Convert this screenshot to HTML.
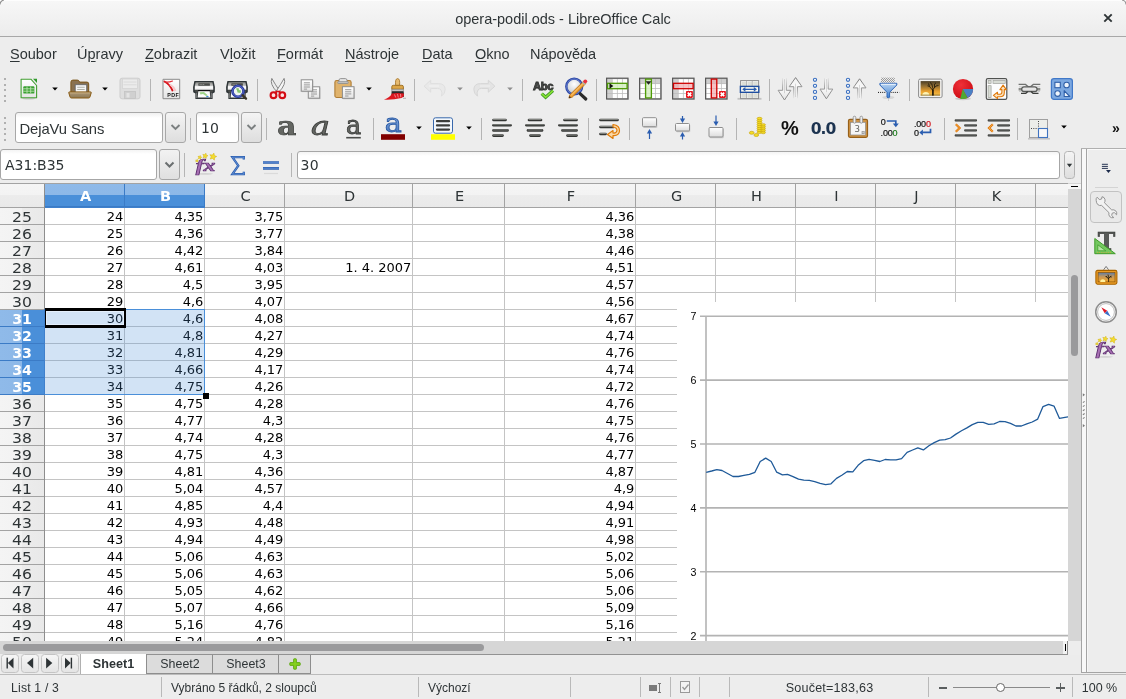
<!DOCTYPE html>
<html lang="cs"><head><meta charset="utf-8"><title>opera-podil.ods - LibreOffice Calc</title>
<style>
html,body{margin:0;padding:0}
body{width:1126px;height:699px;overflow:hidden;background:#ededed;position:relative;will-change:transform;font-family:"Liberation Sans",sans-serif;color:#2e3436}
div,svg{position:absolute;box-sizing:content-box}
u{text-decoration:underline;text-underline-offset:2px}
</style></head>
<body>
<div style="left:0px;top:0px;width:1126px;height:36px;background:linear-gradient(#f7f7f7,#ececec)"></div>
<svg style="left:0px;top:0px" width="6" height="6" viewBox="0 0 6 6"><path d="M0 0H5.500A5.500 5.500 0 0 0 0 5.500Z" fill="#fff"/><path d="M0 4.500A4.500 4.500 0 0 1 4.500 0" fill="none" stroke="#8c8c8c" stroke-width="1.100"/></svg>
<svg style="left:1120px;top:0px" width="6" height="6" viewBox="0 0 6 6"><path d="M6 0H0.500A5.500 5.500 0 0 1 6 5.500Z" fill="#fff"/><path d="M6 4.500A4.500 4.500 0 0 0 1.500 0" fill="none" stroke="#8c8c8c" stroke-width="1.100"/></svg>
<div style="left:0px;top:36px;width:1126px;height:1px;background:#a8a8a8"></div>
<div style="left:4px;top:0px;width:1118px;height:1px;background:#fdfdfd"></div>
<div style="left:0px;top:9.399999999999999px;font-size:14.5px;line-height:20px;height:20px;color:#2e3436;white-space:nowrap;width:1126px;text-align:center;">opera-podil.ods - LibreOffice Calc</div>
<svg style="left:1102px;top:12px" width="12" height="12" viewBox="0 0 12 12"><path d="M2.3 2.3L9.7 9.7M9.7 2.3L2.3 9.7" stroke="#2e3436" stroke-width="1.9" stroke-linecap="butt"/></svg>
<div style="left:10px;top:44.0px;font-size:14.5px;line-height:20px;height:20px;color:#2e3436;white-space:nowrap;"><u>S</u>oubor</div>
<div style="left:77px;top:44.0px;font-size:14.5px;line-height:20px;height:20px;color:#2e3436;white-space:nowrap;">Ú<u>p</u>ravy</div>
<div style="left:145px;top:44.0px;font-size:14.5px;line-height:20px;height:20px;color:#2e3436;white-space:nowrap;"><u>Z</u>obrazit</div>
<div style="left:220px;top:44.0px;font-size:14.5px;line-height:20px;height:20px;color:#2e3436;white-space:nowrap;">V<u>l</u>ožit</div>
<div style="left:277px;top:44.0px;font-size:14.5px;line-height:20px;height:20px;color:#2e3436;white-space:nowrap;"><u>F</u>ormát</div>
<div style="left:345px;top:44.0px;font-size:14.5px;line-height:20px;height:20px;color:#2e3436;white-space:nowrap;"><u>N</u>ástroje</div>
<div style="left:422px;top:44.0px;font-size:14.5px;line-height:20px;height:20px;color:#2e3436;white-space:nowrap;"><u>D</u>ata</div>
<div style="left:475px;top:44.0px;font-size:14.5px;line-height:20px;height:20px;color:#2e3436;white-space:nowrap;"><u>O</u>kno</div>
<div style="left:530px;top:44.0px;font-size:14.5px;line-height:20px;height:20px;color:#2e3436;white-space:nowrap;">Nápo<u>v</u>ěda</div>
<svg width="0" height="0" style="left:0;top:0"><defs>
<linearGradient id="gPaper" x1="0" y1="0" x2="0" y2="1"><stop offset="0" stop-color="#ffffff"/><stop offset="1" stop-color="#e4e4e4"/></linearGradient>
<linearGradient id="gFold" x1="0" y1="0" x2="0" y2="1"><stop offset="0" stop-color="#b09a78"/><stop offset="1" stop-color="#8c7854"/></linearGradient>
<linearGradient id="gPr" x1="0" y1="0" x2="0" y2="1"><stop offset="0" stop-color="#e8e8e8"/><stop offset="1" stop-color="#8c8c8c"/></linearGradient>
<linearGradient id="gBlueA" x1="0" y1="0" x2="0" y2="1"><stop offset="0" stop-color="#a4c2ec"/><stop offset="1" stop-color="#3a6cb8"/></linearGradient>
<linearGradient id="gSun" x1="0" y1="0" x2="0" y2="1"><stop offset="0" stop-color="#4a3c24"/><stop offset="0.3" stop-color="#8a6a34"/><stop offset="0.7" stop-color="#e8a030"/><stop offset="1" stop-color="#f4c048"/></linearGradient>
<linearGradient id="gFun" x1="0" y1="0" x2="0" y2="1"><stop offset="0" stop-color="#bcd6f2"/><stop offset="1" stop-color="#3d7fd0"/></linearGradient>
<linearGradient id="gBar" x1="0" y1="0" x2="0" y2="1"><stop offset="0" stop-color="#8a8c88"/><stop offset="1" stop-color="#3c3e3c"/></linearGradient>
<linearGradient id="gBox" x1="0" y1="0" x2="0" y2="1"><stop offset="0" stop-color="#ffffff"/><stop offset="1" stop-color="#dcdcdc"/></linearGradient>
<linearGradient id="gPrTop" x1="0" y1="0" x2="0" y2="1"><stop offset="0" stop-color="#8c8e8a"/><stop offset="0.52" stop-color="#c8c8c8"/><stop offset="0.58" stop-color="#ffffff"/><stop offset="1" stop-color="#ececec"/></linearGradient>
<radialGradient id="gLens" cx="0.5" cy="0.35" r="0.6"><stop offset="0" stop-color="#ffffff"/><stop offset="1" stop-color="#c8ccd0"/></radialGradient>
<radialGradient id="gPie" cx="0.4" cy="0.3" r="0.8"><stop offset="0" stop-color="#f03038"/><stop offset="1" stop-color="#c80810"/></radialGradient>
<linearGradient id="gArrD" x1="0" y1="0" x2="0" y2="1"><stop offset="0" stop-color="#ffffff" stop-opacity="0.2"/><stop offset="0.5" stop-color="#fafafa"/><stop offset="1" stop-color="#e2e2e2"/></linearGradient>
<linearGradient id="gArrDS" x1="0" y1="0" x2="0" y2="1"><stop offset="0" stop-color="#9a9a9a" stop-opacity="0.15"/><stop offset="0.45" stop-color="#9a9a9a"/><stop offset="1" stop-color="#8a8a8a"/></linearGradient>
<linearGradient id="gArrU" x1="0" y1="1" x2="0" y2="0"><stop offset="0" stop-color="#ffffff" stop-opacity="0.2"/><stop offset="0.5" stop-color="#fafafa"/><stop offset="1" stop-color="#f2f2f2"/></linearGradient>
<linearGradient id="gArrUS" x1="0" y1="1" x2="0" y2="0"><stop offset="0" stop-color="#9a9a9a" stop-opacity="0.15"/><stop offset="0.45" stop-color="#9a9a9a"/><stop offset="1" stop-color="#7a7a7a"/></linearGradient>
<pattern id="hatch" width="2" height="2" patternUnits="userSpaceOnUse"><rect width="1" height="1" fill="#9a9a9a"/><rect x="1" y="1" width="1" height="1" fill="#9a9a9a"/></pattern>
</defs></svg>
<div style="left:4px;top:78.0px;width:2px;height:2px;background:#b0b0b0"></div><div style="left:4px;top:83.5px;width:2px;height:2px;background:#b0b0b0"></div><div style="left:4px;top:89.0px;width:2px;height:2px;background:#b0b0b0"></div><div style="left:4px;top:94.5px;width:2px;height:2px;background:#b0b0b0"></div><div style="left:4px;top:100.0px;width:2px;height:2px;background:#b0b0b0"></div>
<svg style="left:16.0px;top:76.0px" width="26" height="26" viewBox="0 0 26 26"><ellipse cx="12.800" cy="22.600" rx="7" ry="0.900" fill="#b0b0b0" opacity="0.600"/><path d="M5.100 3.200H14.900L20.600 9.500V21.800H5.100Z" fill="url(#gPaper)" stroke="#43a033" stroke-width="1.100" stroke-linejoin="round"/><path d="M17 2.700H21V7Z" fill="#2f9a2a"/><rect x="7.300" y="10.300" width="11.100" height="7.300" fill="#3aa032" rx="0.900"/><path d="M7.300 12.800h11.100M7.300 15.200h11.100M11 10.600v6.700M14.700 10.600v6.700" stroke="#c8eabc" stroke-width="0.800"/></svg>
<svg style="left:66.5px;top:76.0px" width="26" height="26" viewBox="0 0 26 26"><path d="M3.900 17V6.100Q3.900 4.100 5.900 4.100H10.300Q11.600 4.100 12.100 5.100L12.600 6.100H19.900Q21.700 6.100 21.700 7.900V17Z" fill="#8a7250" stroke="#7a5418" stroke-width="1"/><rect x="8.200" y="8.700" width="11.500" height="8.500" fill="#f6f6f6" stroke="#66686a" stroke-width="0.900"/><path d="M10.200 11.300h7.500M10.200 13.500h7.500" stroke="#b0b2a8" stroke-width="1.100"/><path d="M2.500 15.900H23.500Q24.500 15.900 24.200 16.900L22.900 21.100Q22.600 22 21.700 22H4.300Q3.400 22 3.100 21.100L1.800 16.900Q1.500 15.900 2.500 15.900Z" fill="url(#gFold)" stroke="#8a5c14" stroke-width="1" stroke-linejoin="round"/><path d="M3 17h20" stroke="#d4b888" stroke-width="0.800" opacity="0.800"/></svg>
<svg style="left:116.5px;top:76.0px" width="26" height="26" viewBox="0 0 26 26"><rect x="3" y="2.200" width="20" height="20.600" rx="2" fill="#dedede" stroke="#cdcdcd"/><rect x="5.500" y="3" width="15" height="9.500" fill="#ebebeb" stroke="#d4d4d4" stroke-width="0.8"/><path d="M6.500 6h13M6.500 8.800h13" stroke="#d6d6d6" stroke-width="0.8"/><rect x="7.500" y="15.500" width="11" height="7" fill="#d0d0d0" stroke="#c4c4c4" stroke-width="0.8"/><rect x="9.500" y="17" width="3" height="4.500" fill="#e4e4e4"/></svg>
<svg style="left:157.5px;top:76.0px" width="26" height="26" viewBox="0 0 26 26"><path d="M5 3.300H21.700V22.700H5Z" fill="url(#gPaper)" stroke="#8a8a8a"/><path d="M6.500 5.500Q11.500 8 14.500 14.500" fill="none" stroke="#d8121a" stroke-width="1.900" stroke-linecap="round"/><path d="M6.800 6Q11 6.500 14.500 5" fill="none" stroke="#e0303a" stroke-width="1.200" stroke-linecap="round"/><path d="M12 8.500Q15.500 10.500 17.500 15" fill="none" stroke="#f6c4c6" stroke-width="2"/><text x="15.300" y="20.700" font-size="5.300" font-weight="bold" text-anchor="middle" fill="#111" font-family="Liberation Sans, sans-serif" letter-spacing="0.5">PDF</text></svg>
<svg style="left:190.0px;top:76.0px" width="26" height="26" viewBox="0 0 26 26"><path d="M4.400 5H23.600Q25.600 11.500 24.800 16.300L22.600 17.600V22.900H5.400V17.600L3.200 16.300Q2.400 11.500 4.400 5Z" fill="#2e3436"/><path d="M5.600 6.200H22.400Q23.500 10 23.300 13.800H4.700Q4.500 10 5.600 6.200Z" fill="url(#gPrTop)"/><rect x="8.300" y="7.300" width="11.600" height="2.500" rx="0.5" fill="#4a4c4a"/><path d="M9.600 8.550h4.600" stroke="#9a9c98" stroke-width="1.100" stroke-dasharray="1 0.8"/><path d="M4.600 14.200H23.400L22.300 16.500H5.700Z" fill="#4a4c4a"/><path d="M6.700 16.800v5.300M21.300 16.800v5.300" stroke="#8a8a8a" stroke-width="0.9"/><rect x="8" y="14" width="12" height="1.300" fill="#111"/><path d="M8.300 15.300H19.700L20.300 21.500H7.700Z" fill="#fbfbfb"/><path d="M9.500 16.300L14 16 18 19.500 16 20 13 18 10.500 18.500Z" fill="#9fd48a"/><rect x="16.300" y="20" width="2.200" height="1.200" fill="#3c8ad8"/></svg>
<svg style="left:222.8px;top:76.0px" width="26" height="26" viewBox="0 0 26 26"><path d="M4.400 5H23.600Q25.600 11.500 24.800 16.300L22.600 17.600V22.900H5.400V17.600L3.200 16.300Q2.400 11.500 4.400 5Z" fill="#2e3436"/><path d="M5.600 6.200H22.400Q23.500 10 23.300 13.800H4.700Q4.500 10 5.600 6.200Z" fill="url(#gPrTop)"/><rect x="8.300" y="7.300" width="11.600" height="2.500" rx="0.5" fill="#4a4c4a"/><path d="M9.600 8.550h4.600" stroke="#9a9c98" stroke-width="1.100" stroke-dasharray="1 0.8"/><path d="M4.600 14.200H23.400L22.300 16.500H5.700Z" fill="#4a4c4a"/><path d="M6.700 16.800v5.300M21.300 16.800v5.300" stroke="#8a8a8a" stroke-width="0.9"/><rect x="8" y="14" width="12" height="1.300" fill="#111"/><path d="M8.300 15.300H19.700L20.300 21.500H7.700Z" fill="#fbfbfb"/><circle cx="15" cy="15.200" r="5.500" fill="#f0f4f0" stroke="#24369a" stroke-width="2.600"/><circle cx="15" cy="15.200" r="5.300" fill="none" stroke="#6474d0" stroke-width="0.900"/><path d="M13 12.500L15.500 12 16 14 18 14.500 17.500 17 14.500 16.500 14 14.500Z" fill="#86c672"/><path d="M19.600 19.300L23 22.600" stroke="#3a3428" stroke-width="2.400" stroke-linecap="round"/></svg>
<svg style="left:264.9px;top:76.0px" width="26" height="26" viewBox="0 0 26 26"><path d="M6.800 2.400Q4.500 8 12 16L14.300 14.500Q10 8 6.800 2.400Z" fill="#ececec" stroke="#858585" stroke-width="1" stroke-linejoin="round"/><path d="M19.100 2.400Q21.500 8 14 16L11.700 14.500Q16 8 19.100 2.400Z" fill="#f6f6f6" stroke="#858585" stroke-width="1" stroke-linejoin="round"/><circle cx="8.500" cy="19.200" r="2.900" fill="#fbe4e4" stroke="#d40c14" stroke-width="2.100"/><circle cx="17.300" cy="19.200" r="2.900" fill="#fbe4e4" stroke="#d40c14" stroke-width="2.100"/><path d="M10.300 16.800L12.500 15M15.500 16.800L13.300 15" stroke="#d40c14" stroke-width="2"/></svg>
<svg style="left:297.0px;top:76.0px" width="26" height="26" viewBox="0 0 26 26"><rect x="12.0" y="11.700000000000001" width="11.4" height="11.4" fill="#9a9a9a" opacity="0.5"/><rect x="11.3" y="10.8" width="11.4" height="11.4" fill="url(#gPaper)" stroke="#8c8c8c" stroke-width="1"/><path d="M14.0 13.8H20.0" stroke="#8e8e8e" stroke-width="0.9"/><path d="M14.0 15.9H20.0" stroke="#8e8e8e" stroke-width="0.9"/><path d="M14.0 18.0H20.0" stroke="#8e8e8e" stroke-width="0.9"/><path d="M14.0 20.1H17.2" stroke="#8e8e8e" stroke-width="0.9"/><rect x="4.9" y="4.7" width="11.4" height="11.4" fill="#9a9a9a" opacity="0.5"/><rect x="4.2" y="3.8" width="11.4" height="11.4" fill="url(#gPaper)" stroke="#8c8c8c" stroke-width="1"/><path d="M6.9 6.8H12.9" stroke="#8e8e8e" stroke-width="0.9"/><path d="M6.9 8.9H12.9" stroke="#8e8e8e" stroke-width="0.9"/><path d="M6.9 11.0H12.9" stroke="#8e8e8e" stroke-width="0.9"/><path d="M6.9 13.1H10.1" stroke="#8e8e8e" stroke-width="0.9"/></svg>
<svg style="left:330.5px;top:76.0px" width="26" height="26" viewBox="0 0 26 26"><rect x="3.900" y="4.500" width="16.200" height="17" rx="1.800" fill="#e0b36c" stroke="#b07d35" stroke-width="1.100"/><path d="M8 7V4.200Q8 2.600 9.600 2.600H14.400Q16 2.600 16 4.200V7Z" fill="#e4e4e4" stroke="#8a8a8a" stroke-width="0.9"/><rect x="6.800" y="5.600" width="10.400" height="1.900" rx="0.500" fill="#c4c4c4" stroke="#8a8a8a" stroke-width="0.700"/><rect x="12.1" y="11.6" width="11.6" height="11.6" fill="#9a9a9a" opacity="0.5"/><rect x="11.4" y="10.7" width="11.6" height="11.6" fill="url(#gPaper)" stroke="#8c8c8c" stroke-width="1"/><path d="M14.1 13.7H20.3" stroke="#8e8e8e" stroke-width="0.9"/><path d="M14.1 15.8H20.3" stroke="#8e8e8e" stroke-width="0.9"/><path d="M14.1 17.9H20.3" stroke="#8e8e8e" stroke-width="0.9"/><path d="M14.1 20.0H17.5" stroke="#8e8e8e" stroke-width="0.9"/></svg>
<svg style="left:382.5px;top:76.0px" width="26" height="26" viewBox="0 0 26 26"><path d="M12.700 9.500Q12.300 6.500 12.700 4.500Q13.200 2.600 14.600 2.600Q16 2.600 16.500 4.500Q16.900 6.500 16.500 9.500Z" fill="#e6bb72" stroke="#a8782c" stroke-width="0.9"/><path d="M10.300 9.300H18.900Q20.400 9.300 20.400 10.800V13.300H8.800V10.800Q8.800 9.300 10.300 9.300Z" fill="#dca648" stroke="#9a6c20" stroke-width="0.9"/><path d="M8.800 13.300H20.400V15.200H8.800Z" fill="#d8d8d8" stroke="#666" stroke-width="0.500"/><path d="M8.600 15.200H20.600Q21.300 18 20.800 21H8.200Q8.600 18 8.600 15.200Z" fill="#2a2a2a"/><path d="M8.900 17.500Q14 16.500 20.900 17.500Q21.400 21 18.500 22Q10 24 0.900 23.600Q7 21.500 8.900 17.500Z" fill="#dc1820"/><path d="M11.500 18.500l1.200 3M14.500 18l0.800 3.500M17.500 18l0.300 3.200" stroke="#f4a0a4" stroke-width="0.800"/><path d="M20 22.300h3" stroke="#bcbcbc" stroke-width="1.200"/></svg>
<svg style="left:421.5px;top:76.0px" width="26" height="26" viewBox="0 0 26 26"><path d="M2.100 10.200L8.700 4.200V7.600H16.500Q23 7.600 23.200 13.500Q23.200 17.500 19.500 20.200Q20.500 16.500 19 14Q17.800 12.400 15.500 12.400H8.700V16.200Z" fill="#e9e9e9" stroke="#dedede" stroke-linejoin="round"/><path d="M7 10h10" stroke="#f2f2f2" stroke-width="1.200"/></svg>
<svg style="left:471.0px;top:76.0px" width="26" height="26" viewBox="0 0 26 26"><path d="M23.900 10.200L17.300 4.200V7.600H9.500Q3 7.600 2.800 13.500Q2.800 17.500 6.500 20.200Q5.500 16.500 7 14Q8.200 12.400 10.500 12.400H17.300V16.200Z" fill="#e4e4e4" stroke="#d6d6d6" stroke-linejoin="round"/><path d="M9 10h10" stroke="#efefef" stroke-width="1.200"/></svg>
<svg style="left:530.0px;top:76.0px" width="26" height="26" viewBox="0 0 26 26"><text x="13" y="13.700" font-size="11.400" font-weight="bold" text-anchor="middle" fill="#4c4e4c" stroke="#2e302e" stroke-width="0.800" font-family="Liberation Sans, sans-serif" letter-spacing="-0.5">Abc</text><path d="M11.700 17.600L15.600 21.300L23 14.600" fill="none" stroke="#3f9a28" stroke-width="3.300"/><path d="M11.700 17.600L15.600 21.300L23 14.600" fill="none" stroke="#8ae234" stroke-width="1.500"/></svg>
<svg style="left:563.0px;top:76.0px" width="26" height="26" viewBox="0 0 26 26"><circle cx="11.200" cy="10.500" r="7.900" fill="url(#gLens)" stroke="#2d48a5" stroke-width="2.400"/><circle cx="11.200" cy="10.500" r="7.600" fill="none" stroke="#6f88d8" stroke-width="0.800"/><path d="M17.300 17.800L22.800 23" stroke="#2b2b2b" stroke-width="3.200" stroke-linecap="round"/><path d="M20.600 5.200L22.900 7.500 9.200 21.200 5.900 22.100 6.800 18.800Z" fill="#f0a030" stroke="#b86c10" stroke-width="0.800" stroke-linejoin="round"/><path d="M8 19.500L20.500 7" stroke="#f8d090" stroke-width="0.900"/><path d="M20.200 5.600L22.500 7.900 21.300 9.100 19 6.800Z" fill="#b0b0b0"/><circle cx="22.300" cy="5.300" r="1.900" fill="#e83040"/><path d="M5.900 22.100L6.500 19.900 8.100 21.500Z" fill="#222"/></svg>
<svg style="left:603.5px;top:76.0px" width="26" height="26" viewBox="0 0 26 26"><rect x="3.5" y="3.2" width="21.4" height="20.8" fill="#aaa" opacity="0.35"/><rect x="2.6" y="2.2" width="21.4" height="20.8" fill="#bcbcbc" stroke="#585858" stroke-width="1.200"/><rect x="3.57" y="3.17" width="4.30" height="4.15" fill="#cfcfcf"/><rect x="8.62" y="3.17" width="4.30" height="4.15" fill="#ffffff"/><rect x="13.67" y="3.17" width="4.30" height="4.15" fill="#ffffff"/><rect x="18.72" y="3.17" width="4.30" height="4.15" fill="#ffffff"/><rect x="3.57" y="8.07" width="4.30" height="4.15" fill="#cfcfcf"/><rect x="8.62" y="8.07" width="4.30" height="4.15" fill="#ffffff"/><rect x="13.67" y="8.07" width="4.30" height="4.15" fill="#ffffff"/><rect x="18.72" y="8.07" width="4.30" height="4.15" fill="#ffffff"/><rect x="3.57" y="12.97" width="4.30" height="4.15" fill="#cfcfcf"/><rect x="8.62" y="12.97" width="4.30" height="4.15" fill="#ffffff"/><rect x="13.67" y="12.97" width="4.30" height="4.15" fill="#ffffff"/><rect x="18.72" y="12.97" width="4.30" height="4.15" fill="#ffffff"/><rect x="3.57" y="17.87" width="4.30" height="4.15" fill="#cfcfcf"/><rect x="8.62" y="17.87" width="4.30" height="4.15" fill="#ffffff"/><rect x="13.67" y="17.87" width="4.30" height="4.15" fill="#ffffff"/><rect x="18.72" y="17.87" width="4.30" height="4.15" fill="#ffffff"/><rect x="3.500" y="7.300" width="19.600" height="5.400" fill="#d4eec0" fill-opacity="0.85" stroke="#4e9a06" stroke-width="1.300"/><path d="M5.500 7.200L9.300 10 5.500 12.800Z" fill="#111"/></svg>
<svg style="left:636.5px;top:76.0px" width="26" height="26" viewBox="0 0 26 26"><rect x="3.5" y="3.2" width="21.4" height="20.8" fill="#aaa" opacity="0.35"/><rect x="2.6" y="2.2" width="21.4" height="20.8" fill="#bcbcbc" stroke="#585858" stroke-width="1.200"/><rect x="3.57" y="3.17" width="4.30" height="4.15" fill="#cfcfcf"/><rect x="8.62" y="3.17" width="4.30" height="4.15" fill="#cfcfcf"/><rect x="13.67" y="3.17" width="4.30" height="4.15" fill="#cfcfcf"/><rect x="18.72" y="3.17" width="4.30" height="4.15" fill="#cfcfcf"/><rect x="3.57" y="8.07" width="4.30" height="4.15" fill="#ffffff"/><rect x="8.62" y="8.07" width="4.30" height="4.15" fill="#ffffff"/><rect x="13.67" y="8.07" width="4.30" height="4.15" fill="#ffffff"/><rect x="18.72" y="8.07" width="4.30" height="4.15" fill="#ffffff"/><rect x="3.57" y="12.97" width="4.30" height="4.15" fill="#ffffff"/><rect x="8.62" y="12.97" width="4.30" height="4.15" fill="#ffffff"/><rect x="13.67" y="12.97" width="4.30" height="4.15" fill="#ffffff"/><rect x="18.72" y="12.97" width="4.30" height="4.15" fill="#ffffff"/><rect x="3.57" y="17.87" width="4.30" height="4.15" fill="#ffffff"/><rect x="8.62" y="17.87" width="4.30" height="4.15" fill="#ffffff"/><rect x="13.67" y="17.87" width="4.30" height="4.15" fill="#ffffff"/><rect x="18.72" y="17.87" width="4.30" height="4.15" fill="#ffffff"/><rect x="8.600" y="3.100" width="5.800" height="18.800" fill="#d4eec0" fill-opacity="0.85" stroke="#4e9a06" stroke-width="1.300"/><path d="M8.500 5.200H14.500L11.500 8.800Z" fill="#222"/></svg>
<svg style="left:670.0px;top:76.0px" width="26" height="26" viewBox="0 0 26 26"><rect x="3.5" y="3.2" width="21.4" height="20.8" fill="#aaa" opacity="0.35"/><rect x="2.6" y="2.2" width="21.4" height="20.8" fill="#bcbcbc" stroke="#585858" stroke-width="1.200"/><rect x="3.57" y="3.17" width="4.30" height="4.15" fill="#cfcfcf"/><rect x="8.62" y="3.17" width="4.30" height="4.15" fill="#ffffff"/><rect x="13.67" y="3.17" width="4.30" height="4.15" fill="#ffffff"/><rect x="18.72" y="3.17" width="4.30" height="4.15" fill="#ffffff"/><rect x="3.57" y="8.07" width="4.30" height="4.15" fill="#cfcfcf"/><rect x="8.62" y="8.07" width="4.30" height="4.15" fill="#ffffff"/><rect x="13.67" y="8.07" width="4.30" height="4.15" fill="#ffffff"/><rect x="18.72" y="8.07" width="4.30" height="4.15" fill="#ffffff"/><rect x="3.57" y="12.97" width="4.30" height="4.15" fill="#cfcfcf"/><rect x="8.62" y="12.97" width="4.30" height="4.15" fill="#ffffff"/><rect x="13.67" y="12.97" width="4.30" height="4.15" fill="#ffffff"/><rect x="18.72" y="12.97" width="4.30" height="4.15" fill="#ffffff"/><rect x="3.57" y="17.87" width="4.30" height="4.15" fill="#cfcfcf"/><rect x="8.62" y="17.87" width="4.30" height="4.15" fill="#ffffff"/><rect x="13.67" y="17.87" width="4.30" height="4.15" fill="#ffffff"/><rect x="18.72" y="17.87" width="4.30" height="4.15" fill="#ffffff"/><rect x="3.500" y="7.300" width="19.600" height="5.400" fill="#f2a8ac" fill-opacity="0.7" stroke="#d00000" stroke-width="1.300"/><rect x="16" y="15" width="6.900" height="6.900" rx="0.800" fill="#e8141c"/><path d="M17.7 16.7l3.500 3.500M21.2 16.7l-3.500 3.500" stroke="#fff" stroke-width="1.700"/></svg>
<svg style="left:703.0px;top:76.0px" width="26" height="26" viewBox="0 0 26 26"><rect x="3.5" y="3.2" width="21.4" height="20.8" fill="#aaa" opacity="0.35"/><rect x="2.6" y="2.2" width="21.4" height="20.8" fill="#bcbcbc" stroke="#585858" stroke-width="1.200"/><rect x="3.57" y="3.17" width="4.30" height="4.15" fill="#cfcfcf"/><rect x="8.62" y="3.17" width="4.30" height="4.15" fill="#cfcfcf"/><rect x="13.67" y="3.17" width="4.30" height="4.15" fill="#cfcfcf"/><rect x="18.72" y="3.17" width="4.30" height="4.15" fill="#cfcfcf"/><rect x="3.57" y="8.07" width="4.30" height="4.15" fill="#ffffff"/><rect x="8.62" y="8.07" width="4.30" height="4.15" fill="#ffffff"/><rect x="13.67" y="8.07" width="4.30" height="4.15" fill="#ffffff"/><rect x="18.72" y="8.07" width="4.30" height="4.15" fill="#ffffff"/><rect x="3.57" y="12.97" width="4.30" height="4.15" fill="#ffffff"/><rect x="8.62" y="12.97" width="4.30" height="4.15" fill="#ffffff"/><rect x="13.67" y="12.97" width="4.30" height="4.15" fill="#ffffff"/><rect x="18.72" y="12.97" width="4.30" height="4.15" fill="#ffffff"/><rect x="3.57" y="17.87" width="4.30" height="4.15" fill="#ffffff"/><rect x="8.62" y="17.87" width="4.30" height="4.15" fill="#ffffff"/><rect x="13.67" y="17.87" width="4.30" height="4.15" fill="#ffffff"/><rect x="18.72" y="17.87" width="4.30" height="4.15" fill="#ffffff"/><rect x="8.300" y="3.100" width="5.500" height="18.800" fill="#f2a8ac" fill-opacity="0.7" stroke="#d00000" stroke-width="1.300"/><rect x="16" y="15" width="6.900" height="6.900" rx="0.800" fill="#e8141c"/><path d="M17.7 16.7l3.500 3.500M21.2 16.7l-3.500 3.500" stroke="#fff" stroke-width="1.700"/></svg>
<svg style="left:736.0px;top:76.0px" width="26" height="26" viewBox="0 0 26 26"><path d="M1.500 22.800h24" stroke="#b8b8b8" stroke-width="1.800" opacity="0.8"/><rect x="4.600" y="4.600" width="18" height="18" fill="#fdfdfd" stroke="#8c8c8c"/><rect x="5.6" y="5.6" width="4.600" height="4.600" fill="#dcdfd8"/><rect x="11.4" y="5.6" width="4.600" height="4.600" fill="#dcdfd8"/><rect x="17.2" y="5.6" width="4.600" height="4.600" fill="#dcdfd8"/><rect x="5.6" y="11.4" width="4.600" height="4.600" fill="#dcdfd8"/><rect x="11.4" y="11.4" width="4.600" height="4.600" fill="#dcdfd8"/><rect x="17.2" y="11.4" width="4.600" height="4.600" fill="#dcdfd8"/><rect x="5.6" y="17.2" width="4.600" height="4.600" fill="#dcdfd8"/><rect x="11.4" y="17.2" width="4.600" height="4.600" fill="#dcdfd8"/><rect x="17.2" y="17.2" width="4.600" height="4.600" fill="#dcdfd8"/><path d="M10.500 5v17M16.300 5v17" stroke="#a8a8a8" stroke-width="0.800"/><rect x="4.400" y="10.400" width="18.400" height="5.900" fill="#fdfcf0" stroke="#1f4fa0" stroke-width="1.400"/><path d="M8.500 13.350h10" stroke="#2a5db0" stroke-width="1.300"/><path d="M6.200 13.350l3.200-2.300v4.600zM21 13.350l-3.200-2.300v4.600z" fill="#2a5db0"/></svg>
<svg style="left:777.0px;top:76.0px" width="26" height="26" viewBox="0 0 26 26"><path d="M5.7 2.2V14.3H1.0999999999999996L7.5 24L13.9 14.3H9.3V2.2" fill="url(#gArrD)" stroke="url(#gArrDS)" stroke-width="1" stroke-linejoin="round"/><path d="M7.5 3.2V17.3" stroke="#b4b4b4" stroke-width="0.700" opacity="0.8"/><path d="M16.8 22.2V10.7H12.200000000000001L18.6 1.6L25.0 10.7H20.400000000000002V22.2" fill="url(#gArrU)" stroke="url(#gArrUS)" stroke-width="1" stroke-linejoin="round"/><path d="M18.6 7.699999999999999V21.2" stroke="#b4b4b4" stroke-width="0.700" opacity="0.8"/></svg>
<svg style="left:810.0px;top:76.0px" width="26" height="26" viewBox="0 0 26 26"><circle cx="5" cy="3.8" r="1.600" fill="#f4f8fc" stroke="#3a6fc0" stroke-width="1.100"/><circle cx="5" cy="9.8" r="1.600" fill="#f4f8fc" stroke="#3a6fc0" stroke-width="1.100"/><circle cx="5" cy="15.9" r="1.600" fill="#f4f8fc" stroke="#3a6fc0" stroke-width="1.100"/><circle cx="5" cy="21.9" r="1.600" fill="#f4f8fc" stroke="#3a6fc0" stroke-width="1.100"/><path d="M14.599999999999998 2.2V13.100000000000001H9.999999999999998L16.4 22.8L22.799999999999997 13.100000000000001H18.2V2.2" fill="url(#gArrD)" stroke="url(#gArrDS)" stroke-width="1" stroke-linejoin="round"/><path d="M16.4 3.2V16.1" stroke="#b4b4b4" stroke-width="0.700" opacity="0.8"/></svg>
<svg style="left:843.0px;top:76.0px" width="26" height="26" viewBox="0 0 26 26"><circle cx="5" cy="3.8" r="1.600" fill="#f4f8fc" stroke="#3a6fc0" stroke-width="1.100"/><circle cx="5" cy="9.8" r="1.600" fill="#f4f8fc" stroke="#3a6fc0" stroke-width="1.100"/><circle cx="5" cy="15.9" r="1.600" fill="#f4f8fc" stroke="#3a6fc0" stroke-width="1.100"/><circle cx="5" cy="21.9" r="1.600" fill="#f4f8fc" stroke="#3a6fc0" stroke-width="1.100"/><path d="M14.8 22.8V11.899999999999999H10.200000000000001L16.6 2.8L23.0 11.899999999999999H18.400000000000002V22.8" fill="url(#gArrU)" stroke="url(#gArrUS)" stroke-width="1" stroke-linejoin="round"/><path d="M16.6 8.899999999999999V21.8" stroke="#b4b4b4" stroke-width="0.700" opacity="0.8"/></svg>
<svg style="left:876.0px;top:76.0px" width="26" height="26" viewBox="0 0 26 26"><rect x="5" y="1.600" width="13.800" height="5" fill="url(#hatch)"/><ellipse cx="12.300" cy="21.500" rx="6" ry="1.600" fill="#c4c4c4" opacity="0.6"/><path d="M3.900 7.300H20.800V9L13.600 16.300V21.200Q12.300 22.300 11 21.200V16.300L3.900 9Z" fill="url(#gFun)" stroke="#2f66b8" stroke-width="1" stroke-linejoin="round"/><path d="M5 8.300H19.700" stroke="#eef5fd" stroke-width="1"/><path d="M2 16.400h8M14.600 16.400H23.200" stroke="#111" stroke-width="1" stroke-dasharray="1 1.100"/><rect x="12" y="23.600" width="0.700" height="0.800" fill="#888"/></svg>
<svg style="left:916.5px;top:76.0px" width="26" height="26" viewBox="0 0 26 26"><rect x="1.600" y="3.100" width="23.500" height="18.500" rx="1.500" fill="#f4f4f4" stroke="#8c8c8c"/><rect x="3.600" y="5.100" width="19.500" height="14.500" fill="url(#gSun)"/><path d="M5.200 19.600A3.600 3.600 0 0 1 12.400 19.600Z" fill="#fff6b8" opacity="0.95"/><rect x="3.600" y="18.600" width="19.500" height="1" fill="#5a4420" opacity="0.6"/><path d="M15.900 19.500V12.500M15.900 14.500L12.500 10.500L10.500 9.800M15.900 13.500L19 10L21.500 9.500M15.900 12.500L14.800 8L13 6.500M17.500 11.700V8.200L19 6.800M12.500 10.500L11.500 7.500" stroke="#1a1408" stroke-width="0.800" fill="none"/><path d="M15.900 19.500V13.500" stroke="#1a1408" stroke-width="1.400"/></svg>
<svg style="left:949.5px;top:76.0px" width="26" height="26" viewBox="0 0 26 26"><ellipse cx="13" cy="22.800" rx="8" ry="1.400" fill="#bdbdbd" opacity="0.7"/><circle cx="13" cy="13" r="10.100" fill="url(#gPie)"/><path d="M12.700 13H23.100A10.100 10.100 0 0 1 17.600 22Z" fill="#4a80c4"/><path d="M12.700 13L17.600 22A10.100 10.100 0 0 1 10.200 22.700Z" fill="#4fa830"/></svg>
<svg style="left:982.5px;top:76.0px" width="26" height="26" viewBox="0 0 26 26"><rect x="3.300" y="2.700" width="20.500" height="20.600" rx="1.600" fill="#fdfdfd" stroke="#505250" stroke-width="1.200"/><rect x="5.100" y="4.500" width="3" height="3" fill="#d8dcd4" stroke="#a0a29c" stroke-width="0.700"/><rect x="10" y="4.500" width="12.200" height="3" fill="#d8dcd4" stroke="#a0a29c" stroke-width="0.700"/><rect x="5.100" y="9.700" width="3" height="11.900" fill="#d8dcd4" stroke="#a0a29c" stroke-width="0.700"/><path d="M10.400 19.400L14.500 16.300V18.200H17Q18.900 18.200 18.900 16V13.600H16.900L20.100 9.100L23.300 13.600H21.300V16.500Q21.300 20.800 17 20.800H14.500V22.600Z" fill="#fce4c0" stroke="#e07808" stroke-width="1.100" stroke-linejoin="round"/></svg>
<svg style="left:1015.5px;top:76.0px" width="26" height="26" viewBox="0 0 26 26"><path d="M2.600 8.400H9.500L12 10.600H14.800L17.300 8.400H24.300" fill="none" stroke="#707270" stroke-width="1.300"/><path d="M2.600 13.200H6M20.500 13.200H24.300" stroke="#8a8c88" stroke-width="2.400"/><rect x="5.700" y="10.800" width="15.400" height="4.700" rx="2.300" fill="#e6e6e6" stroke="#585a58" stroke-width="1.300"/><path d="M5 17.300H9.800L11.800 15.600M22.500 17.300H17L15 15.600" fill="none" stroke="#3c3e3c" stroke-width="1.300"/><path d="M3 10.800h3M21 10.800h3M3 15.500h2.500M21.500 15.500H24" stroke="#c4c4c4" stroke-width="0.800"/></svg>
<svg style="left:1049.0px;top:76.0px" width="26" height="26" viewBox="0 0 26 26"><rect x="2.400" y="2.700" width="21" height="20.600" rx="2.600" fill="#7ca8e0" stroke="#4078c8" stroke-width="1.200"/><rect x="5.900" y="6.300" width="5.400" height="5.400" fill="#eef4fb" stroke="#2f5fa8" stroke-width="1.100"/><circle cx="17.600" cy="9" r="2.800" fill="#eef4fb" stroke="#2f5fa8" stroke-width="1.100"/><circle cx="8.600" cy="17.600" r="2.800" fill="#eef4fb" stroke="#2f5fa8" stroke-width="1.100"/><path d="M15.200 14.600v5.900h5.600z" fill="#eef4fb" stroke="#2f5fa8" stroke-width="1.100" stroke-linejoin="round"/></svg>
<svg style="left:49.5px;top:83.5px" width="10" height="10" viewBox="0 0 10 10"><path d="M2.2 3.5h5.6L5 6.6z" fill="#000"/></svg>
<svg style="left:99.5px;top:83.5px" width="10" height="10" viewBox="0 0 10 10"><path d="M2.2 3.5h5.6L5 6.6z" fill="#000"/></svg>
<svg style="left:363.5px;top:83.5px" width="10" height="10" viewBox="0 0 10 10"><path d="M2.2 3.5h5.6L5 6.6z" fill="#000"/></svg>
<svg style="left:454.5px;top:83.5px" width="10" height="10" viewBox="0 0 10 10"><path d="M2.2 3.5h5.6L5 6.6z" fill="#8e8e8e"/></svg>
<svg style="left:504.5px;top:83.5px" width="10" height="10" viewBox="0 0 10 10"><path d="M2.2 3.5h5.6L5 6.6z" fill="#8e8e8e"/></svg>
<div style="left:150px;top:79px;width:1px;height:22px;background:#b4b4b4"></div>
<div style="left:257px;top:79px;width:1px;height:22px;background:#b4b4b4"></div>
<div style="left:414px;top:79px;width:1px;height:22px;background:#b4b4b4"></div>
<div style="left:522px;top:79px;width:1px;height:22px;background:#b4b4b4"></div>
<div style="left:596px;top:79px;width:1px;height:22px;background:#b4b4b4"></div>
<div style="left:769px;top:79px;width:1px;height:22px;background:#b4b4b4"></div>
<div style="left:909px;top:79px;width:1px;height:22px;background:#b4b4b4"></div>
<div style="left:4px;top:116.5px;width:2px;height:2px;background:#b0b0b0"></div><div style="left:4px;top:122.0px;width:2px;height:2px;background:#b0b0b0"></div><div style="left:4px;top:127.5px;width:2px;height:2px;background:#b0b0b0"></div><div style="left:4px;top:133.0px;width:2px;height:2px;background:#b0b0b0"></div><div style="left:4px;top:138.5px;width:2px;height:2px;background:#b0b0b0"></div>
<div style="left:15px;top:112px;width:148px;height:31px;background:linear-gradient(#f0f0f0,#fff 5px);border:1px solid #a8a8a8;border-radius:3px;box-sizing:border-box"></div><div style="left:19.5px;top:118.9px;font-size:14.8px;line-height:20px;height:20px;color:#2e3436;white-space:nowrap;letter-spacing:-0.1px;">DejaVu Sans</div><div style="left:165px;top:112px;width:21px;height:31px;background:linear-gradient(#f4f4f4,#dedede);border:1px solid #a8a8a8;border-radius:3px;box-sizing:border-box"></div><svg style="left:169.0px;top:121.3px" width="13" height="13" viewBox="0 0 13 13"><path d="M2.5 4 L6.5 8 L10.5 4" fill="none" stroke="#7c8081" stroke-width="1.9"/></svg>
<div style="left:190px;top:118px;width:1px;height:22px;background:#b4b4b4"></div>
<div style="left:196px;top:112px;width:43px;height:31px;background:linear-gradient(#f0f0f0,#fff 5px);border:1px solid #a8a8a8;border-radius:3px;box-sizing:border-box"></div><div style="left:201px;top:118.30000000000001px;font-size:14px;line-height:20px;height:20px;color:#2e3436;white-space:nowrap;font-family:'DejaVu Sans', 'Liberation Sans', sans-serif;">10</div><div style="left:241px;top:112px;width:21px;height:31px;background:linear-gradient(#f4f4f4,#dedede);border:1px solid #a8a8a8;border-radius:3px;box-sizing:border-box"></div><svg style="left:245.0px;top:121.3px" width="13" height="13" viewBox="0 0 13 13"><path d="M2.5 4 L6.5 8 L10.5 4" fill="none" stroke="#7c8081" stroke-width="1.9"/></svg>
<div style="left:266px;top:118px;width:1px;height:22px;background:#b4b4b4"></div>
<svg style="left:274.0px;top:115.0px" width="26" height="26" viewBox="0 0 26 26"><text transform="translate(12.900,19.700) scale(1.07,0.940)" font-size="27.500" font-weight="bold" text-anchor="middle" fill="#646662" stroke="#3a3c3a" stroke-width="0.700" font-family="DejaVu Serif, Liberation Serif, serif">a</text></svg>
<svg style="left:307.0px;top:115.0px" width="26" height="26" viewBox="0 0 26 26"><text transform="translate(13.600,19.700) scale(1.160,0.940)" font-size="27.500" font-style="italic" text-anchor="middle" fill="#646662" stroke="#3a3c3a" stroke-width="0.800" font-family="DejaVu Serif, Liberation Serif, serif">a</text></svg>
<svg style="left:340.0px;top:115.0px" width="26" height="26" viewBox="0 0 26 26"><text x="13.500" y="19.400" font-size="25.500" text-anchor="middle" fill="#646662" stroke="#3a3c3a" stroke-width="0.800" font-family="DejaVu Serif, Liberation Serif, serif">a</text><path d="M6.200 22.700h14.600" stroke="#4a4c4a" stroke-width="1.600"/></svg>
<svg style="left:380.0px;top:115.0px" width="26" height="26" viewBox="0 0 26 26"><text transform="translate(13.300,16.800) scale(1.060,0.960)" font-size="27" text-anchor="middle" fill="url(#gBlueA)" stroke="#2c5ca6" stroke-width="0.900" font-family="DejaVu Serif, Liberation Serif, serif">a</text><rect x="1" y="19.2" width="24" height="5.6" fill="#800000"/></svg>
<svg style="left:430.0px;top:115.0px" width="26" height="26" viewBox="0 0 26 26"><rect x="3.500" y="2.800" width="19" height="15.400" rx="2" fill="#f4f8fc" stroke="#3868ac" stroke-width="1"/><path d="M7 6.2h12M7 10.4h12M7 14.6h12" stroke="#3c3e3c" stroke-width="2.3" stroke-linecap="round"/><rect x="1" y="19.2" width="24" height="5.6" fill="#ffff00"/></svg>
<svg style="left:488.5px;top:115.0px" width="26" height="26" viewBox="0 0 26 26"><path d="M4.5 5H16.5" stroke="#333533" stroke-width="2.6" stroke-linecap="round"/><path d="M4.5 4.5H16.5" stroke="#8a8c88" stroke-width="0.9" stroke-linecap="round"/><path d="M4.5 10.2H21.5" stroke="#333533" stroke-width="2.6" stroke-linecap="round"/><path d="M4.5 9.7H21.5" stroke="#8a8c88" stroke-width="0.9" stroke-linecap="round"/><path d="M4.5 15.4H18.5" stroke="#333533" stroke-width="2.6" stroke-linecap="round"/><path d="M4.5 14.9H18.5" stroke="#8a8c88" stroke-width="0.9" stroke-linecap="round"/><path d="M4.5 20.6H13.5" stroke="#333533" stroke-width="2.6" stroke-linecap="round"/><path d="M4.5 20.1H13.5" stroke="#8a8c88" stroke-width="0.9" stroke-linecap="round"/></svg>
<svg style="left:522.0px;top:115.0px" width="26" height="26" viewBox="0 0 26 26"><path d="M7 5H19" stroke="#333533" stroke-width="2.6" stroke-linecap="round"/><path d="M7 4.5H19" stroke="#8a8c88" stroke-width="0.9" stroke-linecap="round"/><path d="M4.5 10.2H21.5" stroke="#333533" stroke-width="2.6" stroke-linecap="round"/><path d="M4.5 9.7H21.5" stroke="#8a8c88" stroke-width="0.9" stroke-linecap="round"/><path d="M6 15.4H20" stroke="#333533" stroke-width="2.6" stroke-linecap="round"/><path d="M6 14.9H20" stroke="#8a8c88" stroke-width="0.9" stroke-linecap="round"/><path d="M8.5 20.6H17.5" stroke="#333533" stroke-width="2.6" stroke-linecap="round"/><path d="M8.5 20.1H17.5" stroke="#8a8c88" stroke-width="0.9" stroke-linecap="round"/></svg>
<svg style="left:555.0px;top:115.0px" width="26" height="26" viewBox="0 0 26 26"><path d="M9.5 5H21.5" stroke="#333533" stroke-width="2.6" stroke-linecap="round"/><path d="M9.5 4.5H21.5" stroke="#8a8c88" stroke-width="0.9" stroke-linecap="round"/><path d="M4.5 10.2H21.5" stroke="#333533" stroke-width="2.6" stroke-linecap="round"/><path d="M4.5 9.7H21.5" stroke="#8a8c88" stroke-width="0.9" stroke-linecap="round"/><path d="M7.5 15.4H21.5" stroke="#333533" stroke-width="2.6" stroke-linecap="round"/><path d="M7.5 14.9H21.5" stroke="#8a8c88" stroke-width="0.9" stroke-linecap="round"/><path d="M12.5 20.6H21.5" stroke="#333533" stroke-width="2.6" stroke-linecap="round"/><path d="M12.5 20.1H21.5" stroke="#8a8c88" stroke-width="0.9" stroke-linecap="round"/></svg>
<svg style="left:596.0px;top:115.0px" width="26" height="26" viewBox="0 0 26 26"><path d="M4.5 5H21.5" stroke="#333533" stroke-width="2.6" stroke-linecap="round"/><path d="M4.5 4.5H21.5" stroke="#8a8c88" stroke-width="0.9" stroke-linecap="round"/><path d="M4.5 12H17.5" stroke="#333533" stroke-width="2.6" stroke-linecap="round"/><path d="M4.5 11.5H17.5" stroke="#8a8c88" stroke-width="0.9" stroke-linecap="round"/><path d="M4.5 19H9.5" stroke="#333533" stroke-width="2.6" stroke-linecap="round"/><path d="M4.5 18.5H9.5" stroke="#8a8c88" stroke-width="0.9" stroke-linecap="round"/><path d="M17 9.5Q24 10.5 23.5 16Q23 21 17 20.5V23.5L11.5 19.5L17 15.5V18Q20.5 18.5 21 15.5Q21 12.5 17 12Z" fill="#fbd9a8" stroke="#e07c08" stroke-width="1.2" stroke-linejoin="round"/></svg>
<svg style="left:636.0px;top:115.0px" width="26" height="26" viewBox="0 0 26 26"><rect x="7.3" y="3.9000000000000004" width="14" height="9" rx="1" fill="#b8b8b8" opacity="0.6"/><rect x="6.5" y="2.7" width="14" height="9" rx="1" fill="url(#gBox)" stroke="#8e8e8e"/><path d="M13.5 24V16" stroke="#2a5db0" stroke-width="1.2"/><path d="M13.5 14l2.6 4.5h-5.2z" fill="#2a5db0"/></svg>
<svg style="left:669.0px;top:115.0px" width="26" height="26" viewBox="0 0 26 26"><rect x="7.3" y="9.7" width="14" height="7.5" rx="1" fill="#b8b8b8" opacity="0.6"/><rect x="6.5" y="8.5" width="14" height="7.5" rx="1" fill="url(#gBox)" stroke="#8e8e8e"/><path d="M13.5 1V6" stroke="#2a5db0" stroke-width="1.2"/><path d="M13.5 8l2.6 -4.5h-5.2z" fill="#2a5db0"/><path d="M13.5 24.5V19" stroke="#2a5db0" stroke-width="1.2"/><path d="M13.5 17l2.6 4.5h-5.2z" fill="#2a5db0"/></svg>
<svg style="left:702.5px;top:115.0px" width="26" height="26" viewBox="0 0 26 26"><path d="M13 0.5V9" stroke="#2a5db0" stroke-width="1.2"/><path d="M13 11l2.6 -4.5h-5.2z" fill="#2a5db0"/><rect x="6.8" y="13.7" width="14" height="9.5" rx="1" fill="#b8b8b8" opacity="0.6"/><rect x="6" y="12.5" width="14" height="9.5" rx="1" fill="url(#gBox)" stroke="#8e8e8e"/></svg>
<svg style="left:744.0px;top:115.0px" width="26" height="26" viewBox="0 0 26 26"><ellipse cx="15.500" cy="17.20" rx="2.500" ry="1.250" fill="#f4dc28" stroke="#c4a000" stroke-width="0.600"/><ellipse cx="15.500" cy="15.25" rx="2.500" ry="1.250" fill="#f4dc28" stroke="#c4a000" stroke-width="0.600"/><ellipse cx="15.500" cy="13.30" rx="2.500" ry="1.250" fill="#f4dc28" stroke="#c4a000" stroke-width="0.600"/><ellipse cx="15.500" cy="11.35" rx="2.500" ry="1.250" fill="#f4dc28" stroke="#c4a000" stroke-width="0.600"/><ellipse cx="15.500" cy="9.40" rx="2.500" ry="1.250" fill="#f4dc28" stroke="#c4a000" stroke-width="0.600"/><ellipse cx="15.500" cy="7.45" rx="2.500" ry="1.250" fill="#f4dc28" stroke="#c4a000" stroke-width="0.600"/><ellipse cx="15.500" cy="5.50" rx="2.500" ry="1.250" fill="#f4dc28" stroke="#c4a000" stroke-width="0.600"/><ellipse cx="15.500" cy="3.55" rx="2.500" ry="1.250" fill="#f4dc28" stroke="#c4a000" stroke-width="0.600"/><ellipse cx="19.300" cy="17.60" rx="2.200" ry="1.150" fill="#f4dc28" stroke="#c4a000" stroke-width="0.600"/><ellipse cx="19.300" cy="15.65" rx="2.200" ry="1.150" fill="#f4dc28" stroke="#c4a000" stroke-width="0.600"/><ellipse cx="19.300" cy="13.70" rx="2.200" ry="1.150" fill="#f4dc28" stroke="#c4a000" stroke-width="0.600"/><ellipse cx="19.300" cy="11.75" rx="2.200" ry="1.150" fill="#f4dc28" stroke="#c4a000" stroke-width="0.600"/><ellipse cx="19.300" cy="9.80" rx="2.200" ry="1.150" fill="#f4dc28" stroke="#c4a000" stroke-width="0.600"/><ellipse cx="7.700" cy="17.800" rx="2.400" ry="1.500" fill="#f4dc28" stroke="#c4a000" stroke-width="0.600"/><ellipse cx="12.300" cy="20" rx="2.400" ry="1.500" fill="#f4dc28" stroke="#c4a000" stroke-width="0.600"/></svg>
<svg style="left:777.0px;top:115.0px" width="26" height="26" viewBox="0 0 26 26"><text x="13" y="20" font-size="20" font-weight="bold" text-anchor="middle" fill="#111" font-family="Liberation Sans, sans-serif">%</text></svg>
<svg style="left:810.0px;top:115.0px" width="26" height="26" viewBox="0 0 26 26"><text x="13" y="18.700" font-size="15.600" font-weight="bold" text-anchor="middle" fill="#1c3350" font-family="DejaVu Sans, sans-serif" letter-spacing="-1">0.0</text></svg>
<svg style="left:844.0px;top:115.0px" width="26" height="26" viewBox="0 0 26 26"><rect x="4.500" y="4.300" width="19" height="18" rx="1.500" fill="#d09444" stroke="#96601a" stroke-width="1.200"/><rect x="6.500" y="7.300" width="15" height="12.700" fill="#f6f6f6" stroke="#8a8a8a" stroke-width="0.700"/><rect x="9.200" y="1.200" width="2.600" height="7" rx="1.300" fill="#ececec" stroke="#8a8a8a" stroke-width="0.800"/><rect x="16" y="1.200" width="2.600" height="7" rx="1.300" fill="#ececec" stroke="#8a8a8a" stroke-width="0.800"/><text x="13.300" y="17.300" font-size="8.600" text-anchor="middle" fill="#606260" font-family="DejaVu Sans, sans-serif">3</text><rect x="18" y="16.500" width="2.200" height="2.200" fill="#d0d0d0" stroke="#888" stroke-width="0.600"/></svg>
<svg style="left:877.0px;top:115.0px" width="26" height="26" viewBox="0 0 26 26"><text x="3.800" y="10.100" font-size="9" stroke="#111" stroke-width="0.200" font-family="Liberation Sans, sans-serif" fill="#111">0</text><text x="3.600" y="20.800" font-size="9" stroke="#111" stroke-width="0.200" font-family="Liberation Sans, sans-serif" fill="#111" letter-spacing="-0.2">.00<tspan fill="#1a7a1a" stroke="#1a7a1a">0</tspan></text><path d="M9.800 6H18.800V9.200" stroke="#2a5db0" stroke-width="1.700" fill="none"/><path d="M18.800 12.200l3-3.600h-6z" fill="#2a5db0"/></svg>
<svg style="left:910.0px;top:115.0px" width="26" height="26" viewBox="0 0 26 26"><text x="4" y="11.800" font-size="9" stroke="#111" stroke-width="0.200" font-family="Liberation Sans, sans-serif" fill="#111" letter-spacing="-0.2">.00<tspan fill="#d01018" stroke="#d01018">0</tspan></text><text x="4" y="20.800" font-size="9" stroke="#111" stroke-width="0.200" font-family="Liberation Sans, sans-serif" fill="#111">0</text><path d="M20.500 13.800V17.400H12.300" stroke="#2a5db0" stroke-width="1.700" fill="none"/><path d="M9.300 17.400l3.600-3v6z" fill="#2a5db0"/></svg>
<svg style="left:951.5px;top:115.0px" width="26" height="26" viewBox="0 0 26 26"><path d="M3.7 5.4H24" stroke="#333533" stroke-width="2.1" stroke-linecap="round"/><path d="M3.7 4.9H24" stroke="#8a8c88" stroke-width="0.9" stroke-linecap="round"/><path d="M13.2 10.4H24" stroke="#333533" stroke-width="2.1" stroke-linecap="round"/><path d="M13.2 9.9H24" stroke="#8a8c88" stroke-width="0.9" stroke-linecap="round"/><path d="M13.2 15.4H24" stroke="#333533" stroke-width="2.1" stroke-linecap="round"/><path d="M13.2 14.9H24" stroke="#8a8c88" stroke-width="0.9" stroke-linecap="round"/><path d="M3.7 20.4H24" stroke="#333533" stroke-width="2.1" stroke-linecap="round"/><path d="M3.7 19.9H24" stroke="#8a8c88" stroke-width="0.9" stroke-linecap="round"/><path d="M3.800 9.300L7.600 13L3.800 16.700" fill="none" stroke="#e07808" stroke-width="2.200"/><path d="M3.800 9.300L7.600 13L3.800 16.700" fill="none" stroke="#fcb860" stroke-width="0.700"/></svg>
<svg style="left:984.5px;top:115.0px" width="26" height="26" viewBox="0 0 26 26"><path d="M3.7 5.4H24" stroke="#333533" stroke-width="2.1" stroke-linecap="round"/><path d="M3.7 4.9H24" stroke="#8a8c88" stroke-width="0.9" stroke-linecap="round"/><path d="M13.2 10.4H24" stroke="#333533" stroke-width="2.1" stroke-linecap="round"/><path d="M13.2 9.9H24" stroke="#8a8c88" stroke-width="0.9" stroke-linecap="round"/><path d="M13.2 15.4H24" stroke="#333533" stroke-width="2.1" stroke-linecap="round"/><path d="M13.2 14.9H24" stroke="#8a8c88" stroke-width="0.9" stroke-linecap="round"/><path d="M3.7 20.4H24" stroke="#333533" stroke-width="2.1" stroke-linecap="round"/><path d="M3.7 19.9H24" stroke="#8a8c88" stroke-width="0.9" stroke-linecap="round"/><path d="M7.800 9.300L4 13L7.800 16.700" fill="none" stroke="#e07808" stroke-width="2.200"/><path d="M7.800 9.300L4 13L7.800 16.700" fill="none" stroke="#fcb860" stroke-width="0.700"/></svg>
<svg style="left:1026.0px;top:115.80000000000001px" width="26" height="26" viewBox="0 0 26 26"><path d="M2 22.8h22" stroke="#c2c2c2" stroke-width="1.5"/><rect x="3.5" y="3.5" width="18" height="18" fill="#eceeea" stroke="#a0a0a0"/><path d="M12.5 5v7M5 12.5h7" stroke="#444" stroke-width="1" stroke-dasharray="1 1.3"/><rect x="12.5" y="12.5" width="9" height="9" fill="#f8f8f8" stroke="#3f74c0" stroke-width="1.1"/></svg>
<svg style="left:413.5px;top:122.5px" width="10" height="10" viewBox="0 0 10 10"><path d="M2.2 3.5h5.6L5 6.6z" fill="#000"/></svg>
<svg style="left:463.5px;top:122.5px" width="10" height="10" viewBox="0 0 10 10"><path d="M2.2 3.5h5.6L5 6.6z" fill="#000"/></svg>
<svg style="left:1058.7px;top:122.3px" width="10" height="10" viewBox="0 0 10 10"><path d="M2.2 3.5h5.6L5 6.6z" fill="#000"/></svg>
<div style="left:373px;top:118px;width:1px;height:22px;background:#b4b4b4"></div>
<div style="left:481px;top:118px;width:1px;height:22px;background:#b4b4b4"></div>
<div style="left:588px;top:118px;width:1px;height:22px;background:#b4b4b4"></div>
<div style="left:629px;top:118px;width:1px;height:22px;background:#b4b4b4"></div>
<div style="left:736px;top:118px;width:1px;height:22px;background:#b4b4b4"></div>
<div style="left:944px;top:118px;width:1px;height:22px;background:#b4b4b4"></div>
<div style="left:1017px;top:118px;width:1px;height:22px;background:#b4b4b4"></div>
<div style="left:1108px;top:117.6px;font-size:14px;line-height:20px;height:20px;color:#111;white-space:nowrap;font-weight:bold;width:16px;text-align:center;">»</div>
<svg style="left:192.5px;top:151.2px" width="26" height="26" viewBox="0 0 26 26"><ellipse cx="12" cy="22.800" rx="8" ry="0.900" fill="#c8c8c8" opacity="0.700"/><text transform="translate(12.6,20.3) scale(1.32,0.9)" x="0" y="0" font-size="18" font-style="italic" font-weight="bold" text-anchor="middle" fill="#a870b4" stroke="#5c2d6e" stroke-width="0.700" font-family="Liberation Serif, serif">fx</text><path d="M4.27 8.35 L4.45 9.34 L5.40 9.70 L4.51 10.18 L4.45 11.19 L3.72 10.50 L2.75 10.76 L3.18 9.85 L2.63 9.00 L3.63 9.13Z" fill="#f4dc30" stroke="#d0b010" stroke-width="0.500" stroke-linejoin="round"/><path d="M7.19 4.46 L7.44 5.79 L8.70 6.27 L7.51 6.91 L7.44 8.26 L6.46 7.33 L5.16 7.68 L5.74 6.46 L5.01 5.33 L6.35 5.51Z" fill="#f4dc30" stroke="#d0b010" stroke-width="0.500" stroke-linejoin="round"/><path d="M12.89 2.19 L13.23 4.04 L14.99 4.72 L13.34 5.62 L13.23 7.50 L11.87 6.20 L10.04 6.69 L10.86 4.99 L9.83 3.40 L11.70 3.65Z" fill="#f4dc30" stroke="#d0b010" stroke-width="0.500" stroke-linejoin="round"/><path d="M20.92 2.12 L21.37 4.57 L23.69 5.46 L21.50 6.65 L21.37 9.14 L19.56 7.42 L17.15 8.06 L18.23 5.81 L16.87 3.72 L19.34 4.05Z" fill="#f4dc30" stroke="#d0b010" stroke-width="0.500" stroke-linejoin="round"/></svg>
<svg style="left:225.0px;top:152.0px" width="26" height="26" viewBox="0 0 26 26"><path d="M18.800 7.500V5.200H7.400L13.300 13.700L7.400 22.200H18.800V19.700" fill="none" stroke="#2a5db0" stroke-width="2.300" stroke-linejoin="miter"/><path d="M18.800 7.500V5.200H7.400L13.300 13.700L7.400 22.200H18.800V19.700" fill="none" stroke="#7aa4e0" stroke-width="0.700" stroke-linejoin="miter"/></svg>
<svg style="left:257.5px;top:152.0px" width="26" height="26" viewBox="0 0 26 26"><path d="M5 10.500h16M5 16.400h16" stroke="#2a5db0" stroke-width="2.600"/><path d="M5 10.300h16M5 16.200h16" stroke="#6a98dc" stroke-width="0.800"/><path d="M6 21.500h14" stroke="#dadada" stroke-width="1.200"/></svg>
<div style="left:0px;top:149px;width:157px;height:31px;background:linear-gradient(#f4f4f4,#fff 4px);border:1px solid #a6a6a6;border-radius:3px;box-sizing:border-box"></div>
<div style="left:5px;top:154.5px;font-size:14px;line-height:20px;height:20px;color:#2e3436;white-space:nowrap;font-family:'DejaVu Sans', 'Liberation Sans', sans-serif;">A31:B35</div>
<div style="left:159px;top:149px;width:21px;height:31px;background:linear-gradient(#f2f2f2,#e0e0e0);border:1px solid #a6a6a6;border-radius:3px;box-sizing:border-box"></div>
<svg style="left:163px;top:160px" width="13" height="9" viewBox="0 0 13 9"><path d="M2.5 2.5 L6.5 6.5 L10.5 2.5" fill="none" stroke="#6b6f70" stroke-width="2"/></svg>
<div style="left:184px;top:153px;width:1px;height:24px;background:#b5b5b5"></div>
<div style="left:291px;top:153px;width:1px;height:24px;background:#b5b5b5"></div>
<div style="left:297px;top:151px;width:763px;height:28px;background:linear-gradient(#f4f4f4,#fff 4px);border:1px solid #a6a6a6;border-radius:3px;box-sizing:border-box"></div>
<div style="left:300.5px;top:155.0px;font-size:14px;line-height:20px;height:20px;color:#2e3436;white-space:nowrap;font-family:'DejaVu Sans', 'Liberation Sans', sans-serif;letter-spacing:0.4px;">30</div>
<div style="left:1064px;top:151px;width:11px;height:28px;background:linear-gradient(#f4f4f4,#dedede);border:1px solid #b4b4b4;border-radius:3.5px;box-sizing:border-box"></div>
<svg style="left:1066px;top:163px" width="7" height="5" viewBox="0 0 7 5"><path d="M0.9 0.800L6.100 0.800L3.500 4.200Z" fill="#2e3436"/></svg>
<div id="grid" style="left:0;top:183px;width:1068px;height:458px;overflow:hidden;background:#fff">
<div style="left:0px;top:0px;width:1068px;height:1px;background:#a3a3a3"></div>
<div style="left:0px;top:1px;width:1068px;height:23px;background:linear-gradient(#f5f5f5 0,#f3f3f3 11px,#ececec 11px,#e9e9e9 23px)"></div>
<div style="left:0px;top:24px;width:1068px;height:1px;background:#a3a3a3"></div>
<div style="left:0px;top:25px;width:44px;height:433px;background:linear-gradient(90deg,#f4f4f4 0,#f2f2f2 22px,#ececec 22px,#e9e9e9 44px)"></div>
<div style="left:44px;top:1px;width:1px;height:458px;background:#8e8e8e"></div>
<div style="left:45px;top:1px;width:160px;height:23px;background:linear-gradient(#8fbae9 0,#8db8e8 11px,#4a8fd9 11px,#4a8fd9 22px,#3b7bc6 22px)"></div>
<div style="left:0px;top:127px;width:44px;height:85px;background:linear-gradient(90deg,#8fbae9 0,#8db8e8 22px,#4a8fd9 22px,#4a8fd9 44px)"></div>
<div style="left:124px;top:1px;width:1px;height:23px;background:#3b7bc6"></div>
<div style="left:124px;top:25px;width:1px;height:433px;background:#c4c4c4"></div>
<div style="left:46px;top:2.9000000000000004px;font-size:14.5px;line-height:20px;height:20px;color:#fff;white-space:nowrap;font-family:'DejaVu Sans', 'Liberation Sans', sans-serif;font-weight:bold;width:79px;text-align:center;">A</div>
<div style="left:204px;top:1px;width:1px;height:23px;background:#3b7bc6"></div>
<div style="left:204px;top:25px;width:1px;height:433px;background:#c4c4c4"></div>
<div style="left:126px;top:2.9000000000000004px;font-size:14.5px;line-height:20px;height:20px;color:#fff;white-space:nowrap;font-family:'DejaVu Sans', 'Liberation Sans', sans-serif;font-weight:bold;width:79px;text-align:center;">B</div>
<div style="left:284px;top:1px;width:1px;height:23px;background:#a3a3a3"></div>
<div style="left:284px;top:25px;width:1px;height:433px;background:#c4c4c4"></div>
<div style="left:206px;top:2.9000000000000004px;font-size:14.5px;line-height:20px;height:20px;color:#2e3436;white-space:nowrap;font-family:'DejaVu Sans', 'Liberation Sans', sans-serif;width:79px;text-align:center;">C</div>
<div style="left:412px;top:1px;width:1px;height:23px;background:#a3a3a3"></div>
<div style="left:412px;top:25px;width:1px;height:433px;background:#c4c4c4"></div>
<div style="left:286px;top:2.9000000000000004px;font-size:14.5px;line-height:20px;height:20px;color:#2e3436;white-space:nowrap;font-family:'DejaVu Sans', 'Liberation Sans', sans-serif;width:127px;text-align:center;">D</div>
<div style="left:504px;top:1px;width:1px;height:23px;background:#a3a3a3"></div>
<div style="left:504px;top:25px;width:1px;height:433px;background:#c4c4c4"></div>
<div style="left:414px;top:2.9000000000000004px;font-size:14.5px;line-height:20px;height:20px;color:#2e3436;white-space:nowrap;font-family:'DejaVu Sans', 'Liberation Sans', sans-serif;width:91px;text-align:center;">E</div>
<div style="left:635px;top:1px;width:1px;height:23px;background:#a3a3a3"></div>
<div style="left:635px;top:25px;width:1px;height:433px;background:#c4c4c4"></div>
<div style="left:506px;top:2.9000000000000004px;font-size:14.5px;line-height:20px;height:20px;color:#2e3436;white-space:nowrap;font-family:'DejaVu Sans', 'Liberation Sans', sans-serif;width:130px;text-align:center;">F</div>
<div style="left:715px;top:1px;width:1px;height:23px;background:#a3a3a3"></div>
<div style="left:715px;top:25px;width:1px;height:433px;background:#c4c4c4"></div>
<div style="left:637px;top:2.9000000000000004px;font-size:14.5px;line-height:20px;height:20px;color:#2e3436;white-space:nowrap;font-family:'DejaVu Sans', 'Liberation Sans', sans-serif;width:79px;text-align:center;">G</div>
<div style="left:795px;top:1px;width:1px;height:23px;background:#a3a3a3"></div>
<div style="left:795px;top:25px;width:1px;height:433px;background:#c4c4c4"></div>
<div style="left:717px;top:2.9000000000000004px;font-size:14.5px;line-height:20px;height:20px;color:#2e3436;white-space:nowrap;font-family:'DejaVu Sans', 'Liberation Sans', sans-serif;width:79px;text-align:center;">H</div>
<div style="left:875px;top:1px;width:1px;height:23px;background:#a3a3a3"></div>
<div style="left:875px;top:25px;width:1px;height:433px;background:#c4c4c4"></div>
<div style="left:797px;top:2.9000000000000004px;font-size:14.5px;line-height:20px;height:20px;color:#2e3436;white-space:nowrap;font-family:'DejaVu Sans', 'Liberation Sans', sans-serif;width:79px;text-align:center;">I</div>
<div style="left:955px;top:1px;width:1px;height:23px;background:#a3a3a3"></div>
<div style="left:955px;top:25px;width:1px;height:433px;background:#c4c4c4"></div>
<div style="left:877px;top:2.9000000000000004px;font-size:14.5px;line-height:20px;height:20px;color:#2e3436;white-space:nowrap;font-family:'DejaVu Sans', 'Liberation Sans', sans-serif;width:79px;text-align:center;">J</div>
<div style="left:1035px;top:1px;width:1px;height:23px;background:#a3a3a3"></div>
<div style="left:1035px;top:25px;width:1px;height:433px;background:#c4c4c4"></div>
<div style="left:957px;top:2.9000000000000004px;font-size:14.5px;line-height:20px;height:20px;color:#2e3436;white-space:nowrap;font-family:'DejaVu Sans', 'Liberation Sans', sans-serif;width:79px;text-align:center;">K</div>
<div style="left:45px;top:41px;width:1023px;height:1px;background:#c4c4c4"></div>
<div style="left:0px;top:41px;width:44px;height:1px;background:#a3a3a3"></div>
<div style="left:0px;top:26.1px;font-size:14.5px;line-height:17px;height:17px;color:#2e3436;white-space:nowrap;font-family:'DejaVu Sans', 'Liberation Sans', sans-serif;width:44px;text-align:center;transform:scaleX(1.08);">25</div>
<div style="left:45px;top:25.1px;font-size:13px;line-height:17px;height:17px;color:#000;white-space:nowrap;font-family:'DejaVu Sans', 'Liberation Sans', sans-serif;width:78.4px;text-align:right;">24</div>
<div style="left:125px;top:25.1px;font-size:13px;line-height:17px;height:17px;color:#000;white-space:nowrap;font-family:'DejaVu Sans', 'Liberation Sans', sans-serif;width:78.4px;text-align:right;">4,35</div>
<div style="left:205px;top:25.1px;font-size:13px;line-height:17px;height:17px;color:#000;white-space:nowrap;font-family:'DejaVu Sans', 'Liberation Sans', sans-serif;width:78.4px;text-align:right;">3,75</div>
<div style="left:505px;top:25.1px;font-size:13px;line-height:17px;height:17px;color:#000;white-space:nowrap;font-family:'DejaVu Sans', 'Liberation Sans', sans-serif;width:129.4px;text-align:right;">4,36</div>
<div style="left:45px;top:58px;width:1023px;height:1px;background:#c4c4c4"></div>
<div style="left:0px;top:58px;width:44px;height:1px;background:#a3a3a3"></div>
<div style="left:0px;top:43.1px;font-size:14.5px;line-height:17px;height:17px;color:#2e3436;white-space:nowrap;font-family:'DejaVu Sans', 'Liberation Sans', sans-serif;width:44px;text-align:center;transform:scaleX(1.08);">26</div>
<div style="left:45px;top:42.1px;font-size:13px;line-height:17px;height:17px;color:#000;white-space:nowrap;font-family:'DejaVu Sans', 'Liberation Sans', sans-serif;width:78.4px;text-align:right;">25</div>
<div style="left:125px;top:42.1px;font-size:13px;line-height:17px;height:17px;color:#000;white-space:nowrap;font-family:'DejaVu Sans', 'Liberation Sans', sans-serif;width:78.4px;text-align:right;">4,36</div>
<div style="left:205px;top:42.1px;font-size:13px;line-height:17px;height:17px;color:#000;white-space:nowrap;font-family:'DejaVu Sans', 'Liberation Sans', sans-serif;width:78.4px;text-align:right;">3,77</div>
<div style="left:505px;top:42.1px;font-size:13px;line-height:17px;height:17px;color:#000;white-space:nowrap;font-family:'DejaVu Sans', 'Liberation Sans', sans-serif;width:129.4px;text-align:right;">4,38</div>
<div style="left:45px;top:75px;width:1023px;height:1px;background:#c4c4c4"></div>
<div style="left:0px;top:75px;width:44px;height:1px;background:#a3a3a3"></div>
<div style="left:0px;top:60.099999999999994px;font-size:14.5px;line-height:17px;height:17px;color:#2e3436;white-space:nowrap;font-family:'DejaVu Sans', 'Liberation Sans', sans-serif;width:44px;text-align:center;transform:scaleX(1.08);">27</div>
<div style="left:45px;top:59.099999999999994px;font-size:13px;line-height:17px;height:17px;color:#000;white-space:nowrap;font-family:'DejaVu Sans', 'Liberation Sans', sans-serif;width:78.4px;text-align:right;">26</div>
<div style="left:125px;top:59.099999999999994px;font-size:13px;line-height:17px;height:17px;color:#000;white-space:nowrap;font-family:'DejaVu Sans', 'Liberation Sans', sans-serif;width:78.4px;text-align:right;">4,42</div>
<div style="left:205px;top:59.099999999999994px;font-size:13px;line-height:17px;height:17px;color:#000;white-space:nowrap;font-family:'DejaVu Sans', 'Liberation Sans', sans-serif;width:78.4px;text-align:right;">3,84</div>
<div style="left:505px;top:59.099999999999994px;font-size:13px;line-height:17px;height:17px;color:#000;white-space:nowrap;font-family:'DejaVu Sans', 'Liberation Sans', sans-serif;width:129.4px;text-align:right;">4,46</div>
<div style="left:45px;top:92px;width:1023px;height:1px;background:#c4c4c4"></div>
<div style="left:0px;top:92px;width:44px;height:1px;background:#a3a3a3"></div>
<div style="left:0px;top:77.1px;font-size:14.5px;line-height:17px;height:17px;color:#2e3436;white-space:nowrap;font-family:'DejaVu Sans', 'Liberation Sans', sans-serif;width:44px;text-align:center;transform:scaleX(1.08);">28</div>
<div style="left:45px;top:76.1px;font-size:13px;line-height:17px;height:17px;color:#000;white-space:nowrap;font-family:'DejaVu Sans', 'Liberation Sans', sans-serif;width:78.4px;text-align:right;">27</div>
<div style="left:125px;top:76.1px;font-size:13px;line-height:17px;height:17px;color:#000;white-space:nowrap;font-family:'DejaVu Sans', 'Liberation Sans', sans-serif;width:78.4px;text-align:right;">4,61</div>
<div style="left:205px;top:76.1px;font-size:13px;line-height:17px;height:17px;color:#000;white-space:nowrap;font-family:'DejaVu Sans', 'Liberation Sans', sans-serif;width:78.4px;text-align:right;">4,03</div>
<div style="left:285px;top:76.1px;font-size:13px;line-height:17px;height:17px;color:#000;white-space:nowrap;font-family:'DejaVu Sans', 'Liberation Sans', sans-serif;width:126.4px;text-align:right;">1. 4. 2007</div>
<div style="left:505px;top:76.1px;font-size:13px;line-height:17px;height:17px;color:#000;white-space:nowrap;font-family:'DejaVu Sans', 'Liberation Sans', sans-serif;width:129.4px;text-align:right;">4,51</div>
<div style="left:45px;top:109px;width:1023px;height:1px;background:#c4c4c4"></div>
<div style="left:0px;top:109px;width:44px;height:1px;background:#a3a3a3"></div>
<div style="left:0px;top:94.1px;font-size:14.5px;line-height:17px;height:17px;color:#2e3436;white-space:nowrap;font-family:'DejaVu Sans', 'Liberation Sans', sans-serif;width:44px;text-align:center;transform:scaleX(1.08);">29</div>
<div style="left:45px;top:93.1px;font-size:13px;line-height:17px;height:17px;color:#000;white-space:nowrap;font-family:'DejaVu Sans', 'Liberation Sans', sans-serif;width:78.4px;text-align:right;">28</div>
<div style="left:125px;top:93.1px;font-size:13px;line-height:17px;height:17px;color:#000;white-space:nowrap;font-family:'DejaVu Sans', 'Liberation Sans', sans-serif;width:78.4px;text-align:right;">4,5</div>
<div style="left:205px;top:93.1px;font-size:13px;line-height:17px;height:17px;color:#000;white-space:nowrap;font-family:'DejaVu Sans', 'Liberation Sans', sans-serif;width:78.4px;text-align:right;">3,95</div>
<div style="left:505px;top:93.1px;font-size:13px;line-height:17px;height:17px;color:#000;white-space:nowrap;font-family:'DejaVu Sans', 'Liberation Sans', sans-serif;width:129.4px;text-align:right;">4,57</div>
<div style="left:45px;top:126px;width:1023px;height:1px;background:#c4c4c4"></div>
<div style="left:0px;top:126px;width:44px;height:1px;background:#a3a3a3"></div>
<div style="left:0px;top:111.1px;font-size:14.5px;line-height:17px;height:17px;color:#2e3436;white-space:nowrap;font-family:'DejaVu Sans', 'Liberation Sans', sans-serif;width:44px;text-align:center;transform:scaleX(1.08);">30</div>
<div style="left:45px;top:110.1px;font-size:13px;line-height:17px;height:17px;color:#000;white-space:nowrap;font-family:'DejaVu Sans', 'Liberation Sans', sans-serif;width:78.4px;text-align:right;">29</div>
<div style="left:125px;top:110.1px;font-size:13px;line-height:17px;height:17px;color:#000;white-space:nowrap;font-family:'DejaVu Sans', 'Liberation Sans', sans-serif;width:78.4px;text-align:right;">4,6</div>
<div style="left:205px;top:110.1px;font-size:13px;line-height:17px;height:17px;color:#000;white-space:nowrap;font-family:'DejaVu Sans', 'Liberation Sans', sans-serif;width:78.4px;text-align:right;">4,07</div>
<div style="left:505px;top:110.1px;font-size:13px;line-height:17px;height:17px;color:#000;white-space:nowrap;font-family:'DejaVu Sans', 'Liberation Sans', sans-serif;width:129.4px;text-align:right;">4,56</div>
<div style="left:45px;top:143px;width:1023px;height:1px;background:#c4c4c4"></div>
<div style="left:0px;top:143px;width:44px;height:1px;background:#3b7bc6"></div>
<div style="left:0px;top:128.1px;font-size:14.2px;line-height:17px;height:17px;color:#fff;white-space:nowrap;font-family:'DejaVu Sans', 'Liberation Sans', sans-serif;font-weight:bold;width:44px;text-align:center;">31</div>
<div style="left:45px;top:127.1px;font-size:13px;line-height:17px;height:17px;color:#000;white-space:nowrap;font-family:'DejaVu Sans', 'Liberation Sans', sans-serif;width:78.4px;text-align:right;">30</div>
<div style="left:125px;top:127.1px;font-size:13px;line-height:17px;height:17px;color:#000;white-space:nowrap;font-family:'DejaVu Sans', 'Liberation Sans', sans-serif;width:78.4px;text-align:right;">4,6</div>
<div style="left:205px;top:127.1px;font-size:13px;line-height:17px;height:17px;color:#000;white-space:nowrap;font-family:'DejaVu Sans', 'Liberation Sans', sans-serif;width:78.4px;text-align:right;">4,08</div>
<div style="left:505px;top:127.1px;font-size:13px;line-height:17px;height:17px;color:#000;white-space:nowrap;font-family:'DejaVu Sans', 'Liberation Sans', sans-serif;width:129.4px;text-align:right;">4,67</div>
<div style="left:45px;top:160px;width:1023px;height:1px;background:#c4c4c4"></div>
<div style="left:0px;top:160px;width:44px;height:1px;background:#3b7bc6"></div>
<div style="left:0px;top:145.1px;font-size:14.2px;line-height:17px;height:17px;color:#fff;white-space:nowrap;font-family:'DejaVu Sans', 'Liberation Sans', sans-serif;font-weight:bold;width:44px;text-align:center;">32</div>
<div style="left:45px;top:144.1px;font-size:13px;line-height:17px;height:17px;color:#000;white-space:nowrap;font-family:'DejaVu Sans', 'Liberation Sans', sans-serif;width:78.4px;text-align:right;">31</div>
<div style="left:125px;top:144.1px;font-size:13px;line-height:17px;height:17px;color:#000;white-space:nowrap;font-family:'DejaVu Sans', 'Liberation Sans', sans-serif;width:78.4px;text-align:right;">4,8</div>
<div style="left:205px;top:144.1px;font-size:13px;line-height:17px;height:17px;color:#000;white-space:nowrap;font-family:'DejaVu Sans', 'Liberation Sans', sans-serif;width:78.4px;text-align:right;">4,27</div>
<div style="left:505px;top:144.1px;font-size:13px;line-height:17px;height:17px;color:#000;white-space:nowrap;font-family:'DejaVu Sans', 'Liberation Sans', sans-serif;width:129.4px;text-align:right;">4,74</div>
<div style="left:45px;top:177px;width:1023px;height:1px;background:#c4c4c4"></div>
<div style="left:0px;top:177px;width:44px;height:1px;background:#3b7bc6"></div>
<div style="left:0px;top:162.1px;font-size:14.2px;line-height:17px;height:17px;color:#fff;white-space:nowrap;font-family:'DejaVu Sans', 'Liberation Sans', sans-serif;font-weight:bold;width:44px;text-align:center;">33</div>
<div style="left:45px;top:161.1px;font-size:13px;line-height:17px;height:17px;color:#000;white-space:nowrap;font-family:'DejaVu Sans', 'Liberation Sans', sans-serif;width:78.4px;text-align:right;">32</div>
<div style="left:125px;top:161.1px;font-size:13px;line-height:17px;height:17px;color:#000;white-space:nowrap;font-family:'DejaVu Sans', 'Liberation Sans', sans-serif;width:78.4px;text-align:right;">4,81</div>
<div style="left:205px;top:161.1px;font-size:13px;line-height:17px;height:17px;color:#000;white-space:nowrap;font-family:'DejaVu Sans', 'Liberation Sans', sans-serif;width:78.4px;text-align:right;">4,29</div>
<div style="left:505px;top:161.1px;font-size:13px;line-height:17px;height:17px;color:#000;white-space:nowrap;font-family:'DejaVu Sans', 'Liberation Sans', sans-serif;width:129.4px;text-align:right;">4,76</div>
<div style="left:45px;top:194px;width:1023px;height:1px;background:#c4c4c4"></div>
<div style="left:0px;top:194px;width:44px;height:1px;background:#3b7bc6"></div>
<div style="left:0px;top:179.1px;font-size:14.2px;line-height:17px;height:17px;color:#fff;white-space:nowrap;font-family:'DejaVu Sans', 'Liberation Sans', sans-serif;font-weight:bold;width:44px;text-align:center;">34</div>
<div style="left:45px;top:178.1px;font-size:13px;line-height:17px;height:17px;color:#000;white-space:nowrap;font-family:'DejaVu Sans', 'Liberation Sans', sans-serif;width:78.4px;text-align:right;">33</div>
<div style="left:125px;top:178.1px;font-size:13px;line-height:17px;height:17px;color:#000;white-space:nowrap;font-family:'DejaVu Sans', 'Liberation Sans', sans-serif;width:78.4px;text-align:right;">4,66</div>
<div style="left:205px;top:178.1px;font-size:13px;line-height:17px;height:17px;color:#000;white-space:nowrap;font-family:'DejaVu Sans', 'Liberation Sans', sans-serif;width:78.4px;text-align:right;">4,17</div>
<div style="left:505px;top:178.1px;font-size:13px;line-height:17px;height:17px;color:#000;white-space:nowrap;font-family:'DejaVu Sans', 'Liberation Sans', sans-serif;width:129.4px;text-align:right;">4,74</div>
<div style="left:45px;top:211px;width:1023px;height:1px;background:#c4c4c4"></div>
<div style="left:0px;top:211px;width:44px;height:1px;background:#3b7bc6"></div>
<div style="left:0px;top:196.1px;font-size:14.2px;line-height:17px;height:17px;color:#fff;white-space:nowrap;font-family:'DejaVu Sans', 'Liberation Sans', sans-serif;font-weight:bold;width:44px;text-align:center;">35</div>
<div style="left:45px;top:195.1px;font-size:13px;line-height:17px;height:17px;color:#000;white-space:nowrap;font-family:'DejaVu Sans', 'Liberation Sans', sans-serif;width:78.4px;text-align:right;">34</div>
<div style="left:125px;top:195.1px;font-size:13px;line-height:17px;height:17px;color:#000;white-space:nowrap;font-family:'DejaVu Sans', 'Liberation Sans', sans-serif;width:78.4px;text-align:right;">4,75</div>
<div style="left:205px;top:195.1px;font-size:13px;line-height:17px;height:17px;color:#000;white-space:nowrap;font-family:'DejaVu Sans', 'Liberation Sans', sans-serif;width:78.4px;text-align:right;">4,26</div>
<div style="left:505px;top:195.1px;font-size:13px;line-height:17px;height:17px;color:#000;white-space:nowrap;font-family:'DejaVu Sans', 'Liberation Sans', sans-serif;width:129.4px;text-align:right;">4,72</div>
<div style="left:45px;top:228px;width:1023px;height:1px;background:#c4c4c4"></div>
<div style="left:0px;top:228px;width:44px;height:1px;background:#a3a3a3"></div>
<div style="left:0px;top:213.1px;font-size:14.5px;line-height:17px;height:17px;color:#2e3436;white-space:nowrap;font-family:'DejaVu Sans', 'Liberation Sans', sans-serif;width:44px;text-align:center;transform:scaleX(1.08);">36</div>
<div style="left:45px;top:212.1px;font-size:13px;line-height:17px;height:17px;color:#000;white-space:nowrap;font-family:'DejaVu Sans', 'Liberation Sans', sans-serif;width:78.4px;text-align:right;">35</div>
<div style="left:125px;top:212.1px;font-size:13px;line-height:17px;height:17px;color:#000;white-space:nowrap;font-family:'DejaVu Sans', 'Liberation Sans', sans-serif;width:78.4px;text-align:right;">4,75</div>
<div style="left:205px;top:212.1px;font-size:13px;line-height:17px;height:17px;color:#000;white-space:nowrap;font-family:'DejaVu Sans', 'Liberation Sans', sans-serif;width:78.4px;text-align:right;">4,28</div>
<div style="left:505px;top:212.1px;font-size:13px;line-height:17px;height:17px;color:#000;white-space:nowrap;font-family:'DejaVu Sans', 'Liberation Sans', sans-serif;width:129.4px;text-align:right;">4,76</div>
<div style="left:45px;top:245px;width:1023px;height:1px;background:#c4c4c4"></div>
<div style="left:0px;top:245px;width:44px;height:1px;background:#a3a3a3"></div>
<div style="left:0px;top:230.1px;font-size:14.5px;line-height:17px;height:17px;color:#2e3436;white-space:nowrap;font-family:'DejaVu Sans', 'Liberation Sans', sans-serif;width:44px;text-align:center;transform:scaleX(1.08);">37</div>
<div style="left:45px;top:229.1px;font-size:13px;line-height:17px;height:17px;color:#000;white-space:nowrap;font-family:'DejaVu Sans', 'Liberation Sans', sans-serif;width:78.4px;text-align:right;">36</div>
<div style="left:125px;top:229.1px;font-size:13px;line-height:17px;height:17px;color:#000;white-space:nowrap;font-family:'DejaVu Sans', 'Liberation Sans', sans-serif;width:78.4px;text-align:right;">4,77</div>
<div style="left:205px;top:229.1px;font-size:13px;line-height:17px;height:17px;color:#000;white-space:nowrap;font-family:'DejaVu Sans', 'Liberation Sans', sans-serif;width:78.4px;text-align:right;">4,3</div>
<div style="left:505px;top:229.1px;font-size:13px;line-height:17px;height:17px;color:#000;white-space:nowrap;font-family:'DejaVu Sans', 'Liberation Sans', sans-serif;width:129.4px;text-align:right;">4,75</div>
<div style="left:45px;top:262px;width:1023px;height:1px;background:#c4c4c4"></div>
<div style="left:0px;top:262px;width:44px;height:1px;background:#a3a3a3"></div>
<div style="left:0px;top:247.1px;font-size:14.5px;line-height:17px;height:17px;color:#2e3436;white-space:nowrap;font-family:'DejaVu Sans', 'Liberation Sans', sans-serif;width:44px;text-align:center;transform:scaleX(1.08);">38</div>
<div style="left:45px;top:246.1px;font-size:13px;line-height:17px;height:17px;color:#000;white-space:nowrap;font-family:'DejaVu Sans', 'Liberation Sans', sans-serif;width:78.4px;text-align:right;">37</div>
<div style="left:125px;top:246.1px;font-size:13px;line-height:17px;height:17px;color:#000;white-space:nowrap;font-family:'DejaVu Sans', 'Liberation Sans', sans-serif;width:78.4px;text-align:right;">4,74</div>
<div style="left:205px;top:246.1px;font-size:13px;line-height:17px;height:17px;color:#000;white-space:nowrap;font-family:'DejaVu Sans', 'Liberation Sans', sans-serif;width:78.4px;text-align:right;">4,28</div>
<div style="left:505px;top:246.1px;font-size:13px;line-height:17px;height:17px;color:#000;white-space:nowrap;font-family:'DejaVu Sans', 'Liberation Sans', sans-serif;width:129.4px;text-align:right;">4,76</div>
<div style="left:45px;top:279px;width:1023px;height:1px;background:#c4c4c4"></div>
<div style="left:0px;top:279px;width:44px;height:1px;background:#a3a3a3"></div>
<div style="left:0px;top:264.1px;font-size:14.5px;line-height:17px;height:17px;color:#2e3436;white-space:nowrap;font-family:'DejaVu Sans', 'Liberation Sans', sans-serif;width:44px;text-align:center;transform:scaleX(1.08);">39</div>
<div style="left:45px;top:263.1px;font-size:13px;line-height:17px;height:17px;color:#000;white-space:nowrap;font-family:'DejaVu Sans', 'Liberation Sans', sans-serif;width:78.4px;text-align:right;">38</div>
<div style="left:125px;top:263.1px;font-size:13px;line-height:17px;height:17px;color:#000;white-space:nowrap;font-family:'DejaVu Sans', 'Liberation Sans', sans-serif;width:78.4px;text-align:right;">4,75</div>
<div style="left:205px;top:263.1px;font-size:13px;line-height:17px;height:17px;color:#000;white-space:nowrap;font-family:'DejaVu Sans', 'Liberation Sans', sans-serif;width:78.4px;text-align:right;">4,3</div>
<div style="left:505px;top:263.1px;font-size:13px;line-height:17px;height:17px;color:#000;white-space:nowrap;font-family:'DejaVu Sans', 'Liberation Sans', sans-serif;width:129.4px;text-align:right;">4,77</div>
<div style="left:45px;top:296px;width:1023px;height:1px;background:#c4c4c4"></div>
<div style="left:0px;top:296px;width:44px;height:1px;background:#a3a3a3"></div>
<div style="left:0px;top:281.1px;font-size:14.5px;line-height:17px;height:17px;color:#2e3436;white-space:nowrap;font-family:'DejaVu Sans', 'Liberation Sans', sans-serif;width:44px;text-align:center;transform:scaleX(1.08);">40</div>
<div style="left:45px;top:280.1px;font-size:13px;line-height:17px;height:17px;color:#000;white-space:nowrap;font-family:'DejaVu Sans', 'Liberation Sans', sans-serif;width:78.4px;text-align:right;">39</div>
<div style="left:125px;top:280.1px;font-size:13px;line-height:17px;height:17px;color:#000;white-space:nowrap;font-family:'DejaVu Sans', 'Liberation Sans', sans-serif;width:78.4px;text-align:right;">4,81</div>
<div style="left:205px;top:280.1px;font-size:13px;line-height:17px;height:17px;color:#000;white-space:nowrap;font-family:'DejaVu Sans', 'Liberation Sans', sans-serif;width:78.4px;text-align:right;">4,36</div>
<div style="left:505px;top:280.1px;font-size:13px;line-height:17px;height:17px;color:#000;white-space:nowrap;font-family:'DejaVu Sans', 'Liberation Sans', sans-serif;width:129.4px;text-align:right;">4,87</div>
<div style="left:45px;top:313px;width:1023px;height:1px;background:#c4c4c4"></div>
<div style="left:0px;top:313px;width:44px;height:1px;background:#a3a3a3"></div>
<div style="left:0px;top:298.1px;font-size:14.5px;line-height:17px;height:17px;color:#2e3436;white-space:nowrap;font-family:'DejaVu Sans', 'Liberation Sans', sans-serif;width:44px;text-align:center;transform:scaleX(1.08);">41</div>
<div style="left:45px;top:297.1px;font-size:13px;line-height:17px;height:17px;color:#000;white-space:nowrap;font-family:'DejaVu Sans', 'Liberation Sans', sans-serif;width:78.4px;text-align:right;">40</div>
<div style="left:125px;top:297.1px;font-size:13px;line-height:17px;height:17px;color:#000;white-space:nowrap;font-family:'DejaVu Sans', 'Liberation Sans', sans-serif;width:78.4px;text-align:right;">5,04</div>
<div style="left:205px;top:297.1px;font-size:13px;line-height:17px;height:17px;color:#000;white-space:nowrap;font-family:'DejaVu Sans', 'Liberation Sans', sans-serif;width:78.4px;text-align:right;">4,57</div>
<div style="left:505px;top:297.1px;font-size:13px;line-height:17px;height:17px;color:#000;white-space:nowrap;font-family:'DejaVu Sans', 'Liberation Sans', sans-serif;width:129.4px;text-align:right;">4,9</div>
<div style="left:45px;top:330px;width:1023px;height:1px;background:#c4c4c4"></div>
<div style="left:0px;top:330px;width:44px;height:1px;background:#a3a3a3"></div>
<div style="left:0px;top:315.1px;font-size:14.5px;line-height:17px;height:17px;color:#2e3436;white-space:nowrap;font-family:'DejaVu Sans', 'Liberation Sans', sans-serif;width:44px;text-align:center;transform:scaleX(1.08);">42</div>
<div style="left:45px;top:314.1px;font-size:13px;line-height:17px;height:17px;color:#000;white-space:nowrap;font-family:'DejaVu Sans', 'Liberation Sans', sans-serif;width:78.4px;text-align:right;">41</div>
<div style="left:125px;top:314.1px;font-size:13px;line-height:17px;height:17px;color:#000;white-space:nowrap;font-family:'DejaVu Sans', 'Liberation Sans', sans-serif;width:78.4px;text-align:right;">4,85</div>
<div style="left:205px;top:314.1px;font-size:13px;line-height:17px;height:17px;color:#000;white-space:nowrap;font-family:'DejaVu Sans', 'Liberation Sans', sans-serif;width:78.4px;text-align:right;">4,4</div>
<div style="left:505px;top:314.1px;font-size:13px;line-height:17px;height:17px;color:#000;white-space:nowrap;font-family:'DejaVu Sans', 'Liberation Sans', sans-serif;width:129.4px;text-align:right;">4,94</div>
<div style="left:45px;top:347px;width:1023px;height:1px;background:#c4c4c4"></div>
<div style="left:0px;top:347px;width:44px;height:1px;background:#a3a3a3"></div>
<div style="left:0px;top:332.1px;font-size:14.5px;line-height:17px;height:17px;color:#2e3436;white-space:nowrap;font-family:'DejaVu Sans', 'Liberation Sans', sans-serif;width:44px;text-align:center;transform:scaleX(1.08);">43</div>
<div style="left:45px;top:331.1px;font-size:13px;line-height:17px;height:17px;color:#000;white-space:nowrap;font-family:'DejaVu Sans', 'Liberation Sans', sans-serif;width:78.4px;text-align:right;">42</div>
<div style="left:125px;top:331.1px;font-size:13px;line-height:17px;height:17px;color:#000;white-space:nowrap;font-family:'DejaVu Sans', 'Liberation Sans', sans-serif;width:78.4px;text-align:right;">4,93</div>
<div style="left:205px;top:331.1px;font-size:13px;line-height:17px;height:17px;color:#000;white-space:nowrap;font-family:'DejaVu Sans', 'Liberation Sans', sans-serif;width:78.4px;text-align:right;">4,48</div>
<div style="left:505px;top:331.1px;font-size:13px;line-height:17px;height:17px;color:#000;white-space:nowrap;font-family:'DejaVu Sans', 'Liberation Sans', sans-serif;width:129.4px;text-align:right;">4,91</div>
<div style="left:45px;top:364px;width:1023px;height:1px;background:#c4c4c4"></div>
<div style="left:0px;top:364px;width:44px;height:1px;background:#a3a3a3"></div>
<div style="left:0px;top:349.1px;font-size:14.5px;line-height:17px;height:17px;color:#2e3436;white-space:nowrap;font-family:'DejaVu Sans', 'Liberation Sans', sans-serif;width:44px;text-align:center;transform:scaleX(1.08);">44</div>
<div style="left:45px;top:348.1px;font-size:13px;line-height:17px;height:17px;color:#000;white-space:nowrap;font-family:'DejaVu Sans', 'Liberation Sans', sans-serif;width:78.4px;text-align:right;">43</div>
<div style="left:125px;top:348.1px;font-size:13px;line-height:17px;height:17px;color:#000;white-space:nowrap;font-family:'DejaVu Sans', 'Liberation Sans', sans-serif;width:78.4px;text-align:right;">4,94</div>
<div style="left:205px;top:348.1px;font-size:13px;line-height:17px;height:17px;color:#000;white-space:nowrap;font-family:'DejaVu Sans', 'Liberation Sans', sans-serif;width:78.4px;text-align:right;">4,49</div>
<div style="left:505px;top:348.1px;font-size:13px;line-height:17px;height:17px;color:#000;white-space:nowrap;font-family:'DejaVu Sans', 'Liberation Sans', sans-serif;width:129.4px;text-align:right;">4,98</div>
<div style="left:45px;top:381px;width:1023px;height:1px;background:#c4c4c4"></div>
<div style="left:0px;top:381px;width:44px;height:1px;background:#a3a3a3"></div>
<div style="left:0px;top:366.1px;font-size:14.5px;line-height:17px;height:17px;color:#2e3436;white-space:nowrap;font-family:'DejaVu Sans', 'Liberation Sans', sans-serif;width:44px;text-align:center;transform:scaleX(1.08);">45</div>
<div style="left:45px;top:365.1px;font-size:13px;line-height:17px;height:17px;color:#000;white-space:nowrap;font-family:'DejaVu Sans', 'Liberation Sans', sans-serif;width:78.4px;text-align:right;">44</div>
<div style="left:125px;top:365.1px;font-size:13px;line-height:17px;height:17px;color:#000;white-space:nowrap;font-family:'DejaVu Sans', 'Liberation Sans', sans-serif;width:78.4px;text-align:right;">5,06</div>
<div style="left:205px;top:365.1px;font-size:13px;line-height:17px;height:17px;color:#000;white-space:nowrap;font-family:'DejaVu Sans', 'Liberation Sans', sans-serif;width:78.4px;text-align:right;">4,63</div>
<div style="left:505px;top:365.1px;font-size:13px;line-height:17px;height:17px;color:#000;white-space:nowrap;font-family:'DejaVu Sans', 'Liberation Sans', sans-serif;width:129.4px;text-align:right;">5,02</div>
<div style="left:45px;top:398px;width:1023px;height:1px;background:#c4c4c4"></div>
<div style="left:0px;top:398px;width:44px;height:1px;background:#a3a3a3"></div>
<div style="left:0px;top:383.1px;font-size:14.5px;line-height:17px;height:17px;color:#2e3436;white-space:nowrap;font-family:'DejaVu Sans', 'Liberation Sans', sans-serif;width:44px;text-align:center;transform:scaleX(1.08);">46</div>
<div style="left:45px;top:382.1px;font-size:13px;line-height:17px;height:17px;color:#000;white-space:nowrap;font-family:'DejaVu Sans', 'Liberation Sans', sans-serif;width:78.4px;text-align:right;">45</div>
<div style="left:125px;top:382.1px;font-size:13px;line-height:17px;height:17px;color:#000;white-space:nowrap;font-family:'DejaVu Sans', 'Liberation Sans', sans-serif;width:78.4px;text-align:right;">5,06</div>
<div style="left:205px;top:382.1px;font-size:13px;line-height:17px;height:17px;color:#000;white-space:nowrap;font-family:'DejaVu Sans', 'Liberation Sans', sans-serif;width:78.4px;text-align:right;">4,63</div>
<div style="left:505px;top:382.1px;font-size:13px;line-height:17px;height:17px;color:#000;white-space:nowrap;font-family:'DejaVu Sans', 'Liberation Sans', sans-serif;width:129.4px;text-align:right;">5,06</div>
<div style="left:45px;top:415px;width:1023px;height:1px;background:#c4c4c4"></div>
<div style="left:0px;top:415px;width:44px;height:1px;background:#a3a3a3"></div>
<div style="left:0px;top:400.1px;font-size:14.5px;line-height:17px;height:17px;color:#2e3436;white-space:nowrap;font-family:'DejaVu Sans', 'Liberation Sans', sans-serif;width:44px;text-align:center;transform:scaleX(1.08);">47</div>
<div style="left:45px;top:399.1px;font-size:13px;line-height:17px;height:17px;color:#000;white-space:nowrap;font-family:'DejaVu Sans', 'Liberation Sans', sans-serif;width:78.4px;text-align:right;">46</div>
<div style="left:125px;top:399.1px;font-size:13px;line-height:17px;height:17px;color:#000;white-space:nowrap;font-family:'DejaVu Sans', 'Liberation Sans', sans-serif;width:78.4px;text-align:right;">5,05</div>
<div style="left:205px;top:399.1px;font-size:13px;line-height:17px;height:17px;color:#000;white-space:nowrap;font-family:'DejaVu Sans', 'Liberation Sans', sans-serif;width:78.4px;text-align:right;">4,62</div>
<div style="left:505px;top:399.1px;font-size:13px;line-height:17px;height:17px;color:#000;white-space:nowrap;font-family:'DejaVu Sans', 'Liberation Sans', sans-serif;width:129.4px;text-align:right;">5,06</div>
<div style="left:45px;top:432px;width:1023px;height:1px;background:#c4c4c4"></div>
<div style="left:0px;top:432px;width:44px;height:1px;background:#a3a3a3"></div>
<div style="left:0px;top:417.1px;font-size:14.5px;line-height:17px;height:17px;color:#2e3436;white-space:nowrap;font-family:'DejaVu Sans', 'Liberation Sans', sans-serif;width:44px;text-align:center;transform:scaleX(1.08);">48</div>
<div style="left:45px;top:416.1px;font-size:13px;line-height:17px;height:17px;color:#000;white-space:nowrap;font-family:'DejaVu Sans', 'Liberation Sans', sans-serif;width:78.4px;text-align:right;">47</div>
<div style="left:125px;top:416.1px;font-size:13px;line-height:17px;height:17px;color:#000;white-space:nowrap;font-family:'DejaVu Sans', 'Liberation Sans', sans-serif;width:78.4px;text-align:right;">5,07</div>
<div style="left:205px;top:416.1px;font-size:13px;line-height:17px;height:17px;color:#000;white-space:nowrap;font-family:'DejaVu Sans', 'Liberation Sans', sans-serif;width:78.4px;text-align:right;">4,66</div>
<div style="left:505px;top:416.1px;font-size:13px;line-height:17px;height:17px;color:#000;white-space:nowrap;font-family:'DejaVu Sans', 'Liberation Sans', sans-serif;width:129.4px;text-align:right;">5,09</div>
<div style="left:45px;top:449px;width:1023px;height:1px;background:#c4c4c4"></div>
<div style="left:0px;top:449px;width:44px;height:1px;background:#a3a3a3"></div>
<div style="left:0px;top:434.1px;font-size:14.5px;line-height:17px;height:17px;color:#2e3436;white-space:nowrap;font-family:'DejaVu Sans', 'Liberation Sans', sans-serif;width:44px;text-align:center;transform:scaleX(1.08);">49</div>
<div style="left:45px;top:433.1px;font-size:13px;line-height:17px;height:17px;color:#000;white-space:nowrap;font-family:'DejaVu Sans', 'Liberation Sans', sans-serif;width:78.4px;text-align:right;">48</div>
<div style="left:125px;top:433.1px;font-size:13px;line-height:17px;height:17px;color:#000;white-space:nowrap;font-family:'DejaVu Sans', 'Liberation Sans', sans-serif;width:78.4px;text-align:right;">5,16</div>
<div style="left:205px;top:433.1px;font-size:13px;line-height:17px;height:17px;color:#000;white-space:nowrap;font-family:'DejaVu Sans', 'Liberation Sans', sans-serif;width:78.4px;text-align:right;">4,76</div>
<div style="left:505px;top:433.1px;font-size:13px;line-height:17px;height:17px;color:#000;white-space:nowrap;font-family:'DejaVu Sans', 'Liberation Sans', sans-serif;width:129.4px;text-align:right;">5,16</div>
<div style="left:45px;top:466px;width:1023px;height:1px;background:#c4c4c4"></div>
<div style="left:0px;top:466px;width:44px;height:1px;background:#a3a3a3"></div>
<div style="left:0px;top:451.1px;font-size:14.5px;line-height:17px;height:17px;color:#2e3436;white-space:nowrap;font-family:'DejaVu Sans', 'Liberation Sans', sans-serif;width:44px;text-align:center;transform:scaleX(1.08);">50</div>
<div style="left:45px;top:450.1px;font-size:13px;line-height:17px;height:17px;color:#000;white-space:nowrap;font-family:'DejaVu Sans', 'Liberation Sans', sans-serif;width:78.4px;text-align:right;">49</div>
<div style="left:125px;top:450.1px;font-size:13px;line-height:17px;height:17px;color:#000;white-space:nowrap;font-family:'DejaVu Sans', 'Liberation Sans', sans-serif;width:78.4px;text-align:right;">5,24</div>
<div style="left:205px;top:450.1px;font-size:13px;line-height:17px;height:17px;color:#000;white-space:nowrap;font-family:'DejaVu Sans', 'Liberation Sans', sans-serif;width:78.4px;text-align:right;">4,82</div>
<div style="left:505px;top:450.1px;font-size:13px;line-height:17px;height:17px;color:#000;white-space:nowrap;font-family:'DejaVu Sans', 'Liberation Sans', sans-serif;width:129.4px;text-align:right;">5,21</div>
<div style="left:45px;top:24px;width:160px;height:1px;background:#3f80cc"></div>
<div style="left:44px;top:126px;width:1px;height:86px;background:#3f80cc"></div>
<div style="left:45px;top:127px;width:159px;height:84px;background:rgba(74,144,217,0.25)"></div>
<div style="left:45px;top:126px;width:160px;height:1px;background:#4a8fd9"></div>
<div style="left:45px;top:211px;width:160px;height:1px;background:#4a8fd9"></div>
<div style="left:204px;top:126px;width:1px;height:86px;background:#4a8fd9"></div>
<div style="left:45px;top:125px;width:81px;height:20px;border:2px solid #000;border-width:3px 2px 3px 1px;box-sizing:border-box;box-shadow:inset 0 0 0 1px #e4effb"></div>
<div style="left:203px;top:210px;width:6px;height:6px;background:#000"></div>
</div>
<svg style="left:677px;top:302px;background:#fff" width="391" height="339" viewBox="0 0 391 339"><path d="M23.0 14.199999999999989H391" stroke="#b3b3b3" stroke-width="1.6" fill="none"/><text x="16.5" y="18.19999999999999" font-size="10.67" text-anchor="middle" fill="#000" font-family="Liberation Sans, sans-serif">7</text><path d="M23.0 78.10000000000002H391" stroke="#b3b3b3" stroke-width="1.6" fill="none"/><text x="16.5" y="82.10000000000002" font-size="10.67" text-anchor="middle" fill="#000" font-family="Liberation Sans, sans-serif">6</text><path d="M23.0 142H391" stroke="#b3b3b3" stroke-width="1.6" fill="none"/><text x="16.5" y="146" font-size="10.67" text-anchor="middle" fill="#000" font-family="Liberation Sans, sans-serif">5</text><path d="M23.0 205.89999999999998H391" stroke="#b3b3b3" stroke-width="1.6" fill="none"/><text x="16.5" y="209.89999999999998" font-size="10.67" text-anchor="middle" fill="#000" font-family="Liberation Sans, sans-serif">4</text><path d="M23.0 269.79999999999995H391" stroke="#b3b3b3" stroke-width="1.6" fill="none"/><text x="16.5" y="273.79999999999995" font-size="10.67" text-anchor="middle" fill="#000" font-family="Liberation Sans, sans-serif">3</text><path d="M23.0 333.6H391" stroke="#b3b3b3" stroke-width="1.6" fill="none"/><text x="16.5" y="337.6" font-size="10.67" text-anchor="middle" fill="#000" font-family="Liberation Sans, sans-serif">2</text><path d="M29.0 14V339" stroke="#b3b3b3" stroke-width="1.6" fill="none"/><path d="M29.2 170.3 L34.7 169.0 L39.8 167.6 L45.0 168.5 L50.5 171.5 L56.0 174.5 L61.4 174.5 L66.9 173.4 L72.4 172.4 L77.9 170.3 L83.2 159.5 L88.7 156.1 L94.2 159.5 L99.7 170.2 L105.4 172.9 L110.5 172.4 L116.0 174.6 L121.5 177.2 L126.8 178.2 L132.3 178.4 L137.7 179.6 L143.1 181.3 L148.6 182.7 L154.0 181.8 L159.5 176.4 L164.8 173.3 L170.3 169.5 L175.8 169.8 L181.1 163.3 L186.6 158.7 L192.1 157.3 L197.6 158.3 L202.9 159.5 L208.1 157.5 L213.6 157.8 L219.1 157.8 L224.6 156.6 L230.1 150.4 L235.6 148.0 L240.8 145.8 L246.4 147.9 L251.9 143.7 L257.2 140.6 L262.7 138.2 L268.2 137.7 L273.5 136.0 L279.0 132.1 L284.5 128.8 L289.9 125.9 L295.3 122.6 L300.8 120.4 L306.2 120.4 L311.7 122.3 L317.1 121.9 L322.6 119.5 L328.0 119.7 L333.5 121.4 L338.9 124.0 L344.4 124.0 L349.8 121.8 L355.2 120.0 L360.7 117.1 L366.0 104.6 L371.6 102.4 L377.0 104.1 L382.5 116.4 L388.0 115.4 L393.0 114.5" stroke="#1f5a99" stroke-width="1.3" fill="none" stroke-linejoin="round"/></svg>
<div style="left:0px;top:641px;width:1068px;height:13px;background:#d6d6d6"></div>
<div style="left:3px;top:644px;width:481px;height:7px;background:#9a9a9c;border-radius:4px"></div>
<div style="left:1063px;top:641px;width:5px;height:13px;background:#f2f2f2"></div>
<div style="left:1065px;top:644px;width:1px;height:7px;background:#000"></div>
<div style="left:1067px;top:641px;width:1px;height:14px;background:#8c8c8c"></div>
<div style="left:147px;top:654px;width:921px;height:1px;background:#929292"></div>
<div style="left:1068px;top:183px;width:13px;height:458px;background:#d6d6d6"></div>
<div style="left:1071px;top:275px;width:7px;height:81px;background:#9a9a9c;border-radius:4px"></div>
<div style="left:1068px;top:184px;width:13px;height:5px;background:#f6f6f6"></div>
<div style="left:1071px;top:186px;width:7px;height:1.4px;background:#000"></div>
<div style="left:0px;top:655px;width:1081px;height:19px;background:#ececec"></div>
<div style="left:0px;top:674px;width:1126px;height:1px;background:#bcbcbc"></div>
<div style="left:1px;top:654px;width:17.5px;height:19px;background:linear-gradient(#f6f6f6,#e4e4e4);border:1px solid #c4c4c4;border-radius:3.5px;box-sizing:border-box"></div>
<div style="left:21px;top:654px;width:17.5px;height:19px;background:linear-gradient(#f6f6f6,#e4e4e4);border:1px solid #c4c4c4;border-radius:3.5px;box-sizing:border-box"></div>
<div style="left:41px;top:654px;width:17.5px;height:19px;background:linear-gradient(#f6f6f6,#e4e4e4);border:1px solid #c4c4c4;border-radius:3.5px;box-sizing:border-box"></div>
<div style="left:61px;top:654px;width:17.5px;height:19px;background:linear-gradient(#f6f6f6,#e4e4e4);border:1px solid #c4c4c4;border-radius:3.5px;box-sizing:border-box"></div>
<svg style="left:1px;top:654px" width="17.5" height="19" viewBox="0 0 17.5 19"><rect x="5.5" y="3.700" width="1.400" height="10.800" fill="#2e3436"/><path d="M12.500 3.700V14.500L6.900 9.100Z" fill="#2e3436"/></svg>
<svg style="left:21px;top:654px" width="17.5" height="19" viewBox="0 0 17.5 19"><path d="M12.200 3.700V14.500L6 9.100Z" fill="#2e3436"/></svg>
<svg style="left:41px;top:654px" width="17.5" height="19" viewBox="0 0 17.5 19"><path d="M5.100 3.700V14.500L11.300 9.100Z" fill="#2e3436"/></svg>
<svg style="left:61px;top:654px" width="17.5" height="19" viewBox="0 0 17.5 19"><rect x="9.700" y="3.700" width="1.400" height="10.800" fill="#2e3436"/><path d="M4 3.700V14.500L9.700 9.100Z" fill="#2e3436"/></svg>
<div style="left:80px;top:654px;width:67px;height:20px;background:#fff;border-right:1px solid #8e8e8e;border-left:1px solid #b0b0b0;box-sizing:border-box"></div>
<div style="left:147px;top:655px;width:66px;height:19px;background:#dcdcdc;border-right:1px solid #8e8e8e;border-bottom:1px solid #8e8e8e;box-sizing:border-box"></div>
<div style="left:213px;top:655px;width:66px;height:19px;background:#dcdcdc;border-right:1px solid #8e8e8e;border-bottom:1px solid #8e8e8e;box-sizing:border-box"></div>
<div style="left:279px;top:655px;width:32px;height:19px;background:#dcdcdc;border-right:1px solid #8e8e8e;border-bottom:1px solid #8e8e8e;box-sizing:border-box"></div>
<div style="left:80px;top:654.0px;font-size:12.6px;line-height:20px;height:20px;color:#2e3436;white-space:nowrap;font-weight:bold;width:67px;text-align:center;">Sheet1</div>
<div style="left:147px;top:654.0px;font-size:12.4px;line-height:20px;height:20px;color:#2e3436;white-space:nowrap;width:66px;text-align:center;">Sheet2</div>
<div style="left:213px;top:654.0px;font-size:12.4px;line-height:20px;height:20px;color:#2e3436;white-space:nowrap;width:66px;text-align:center;">Sheet3</div>
<svg style="left:289px;top:658px" width="12" height="12" viewBox="0 0 12 12"><path d="M4.600 1.300Q4.600 0.800 5.100 0.800H6.900Q7.400 0.800 7.400 1.300V4.600H10.700Q11.200 4.600 11.200 5.100V6.900Q11.200 7.400 10.700 7.400H7.400V10.700Q7.400 11.200 6.900 11.200H5.100Q4.600 11.200 4.600 10.700V7.400H1.300Q0.800 7.400 0.800 6.900V5.100Q0.800 4.600 1.300 4.600H4.600Z" fill="#86d020" stroke="#5ca810" stroke-width="0.900"/></svg>
<div style="left:161px;top:677px;width:1px;height:20px;background:#b9b9b9"></div>
<div style="left:418px;top:677px;width:1px;height:20px;background:#b9b9b9"></div>
<div style="left:570px;top:677px;width:1px;height:20px;background:#b9b9b9"></div>
<div style="left:640px;top:677px;width:1px;height:20px;background:#b9b9b9"></div>
<div style="left:670px;top:677px;width:1px;height:20px;background:#b9b9b9"></div>
<div style="left:699px;top:677px;width:1px;height:20px;background:#b9b9b9"></div>
<div style="left:729px;top:677px;width:1px;height:20px;background:#b9b9b9"></div>
<div style="left:928px;top:677px;width:1px;height:20px;background:#b9b9b9"></div>
<div style="left:1072px;top:677px;width:1px;height:20px;background:#b9b9b9"></div>
<div style="left:11px;top:677.5px;font-size:12.2px;line-height:20px;height:20px;color:#2e3436;white-space:nowrap;letter-spacing:0.2px;">List 1 / 3</div>
<div style="left:171px;top:677.5px;font-size:12px;line-height:20px;height:20px;color:#2e3436;white-space:nowrap;">Vybráno 5 řádků, 2 sloupců</div>
<div style="left:428px;top:677.5px;font-size:12px;line-height:20px;height:20px;color:#2e3436;white-space:nowrap;">Výchozí</div>
<div style="left:730px;top:677.5px;font-size:12.6px;line-height:20px;height:20px;color:#2e3436;white-space:nowrap;width:199px;text-align:center;letter-spacing:0.2px;">Součet=183,63</div>
<div style="left:1073px;top:677.5px;font-size:12.5px;line-height:20px;height:20px;color:#2e3436;white-space:nowrap;width:53px;text-align:center;">100 %</div>
<div style="left:939px;top:687px;width:8px;height:1.6px;background:#5a5e5f"></div>
<div style="left:953px;top:687px;width:97px;height:1px;background:#8a8a8a"></div>
<div style="left:1056px;top:687px;width:9px;height:1.6px;background:#5a5e5f"></div>
<div style="left:1059.7px;top:683.3px;width:1.6px;height:9px;background:#5a5e5f"></div>
<div style="left:996px;top:683px;width:9px;height:9px;background:#fff;border:1px solid #666;border-radius:50%;box-sizing:border-box"></div>
<svg style="left:648px;top:682px" width="16" height="12" viewBox="0 0 16 12"><rect x="1" y="3" width="8" height="6" fill="#7a7a7a"/><path d="M10 1.5h3M11.5 1.5v9M10 10.5h3" stroke="#7a7a7a" fill="none"/></svg>
<svg style="left:678px;top:680px" width="16" height="14" viewBox="0 0 16 14"><rect x="2.5" y="1.5" width="9" height="11" fill="#f3f3f3" stroke="#9a9a9a"/><path d="M4.5 7l2 2.5 4-5" stroke="#9a9a9a" fill="none" stroke-width="1.3"/></svg>
<div style="left:1087px;top:149px;width:39px;height:1px;background:#fafafa"></div>
<div style="left:1081px;top:148px;width:1px;height:525px;background:#a4a4a4"></div>
<div style="left:1082px;top:148px;width:4px;height:525px;background:#f8f8f8"></div>
<div style="left:1086px;top:148px;width:1px;height:525px;background:#a4a4a4"></div>
<div style="left:1087px;top:149px;width:1px;height:523px;background:#f6f6f6"></div>
<div style="left:1081px;top:672px;width:45px;height:1px;background:#a4a4a4"></div>
<div style="left:1081px;top:148px;width:45px;height:1px;background:#b0b0b0"></div>
<svg style="left:1081.6px;top:391.7px" width="4" height="37" viewBox="0 0 4 37"><path d="M0.800 1.200L3 2.800L0.800 4.400Z" fill="#7a7a7a"/><path d="M0.900 10.6L2.600 9.4" stroke="#808080" stroke-width="1.100"/><path d="M0.900 14.6L2.600 13.4" stroke="#808080" stroke-width="1.100"/><path d="M0.900 18.7L2.600 17.5" stroke="#808080" stroke-width="1.100"/><path d="M0.900 22.7L2.600 21.5" stroke="#808080" stroke-width="1.100"/><path d="M0.900 26.599999999999998L2.600 25.4" stroke="#808080" stroke-width="1.100"/><path d="M0.800 32.100L3 33.700L0.800 35.300Z" fill="#7a7a7a"/></svg>
<svg style="left:1101px;top:163px" width="12" height="11" viewBox="0 0 12 11"><path d="M0.900 1.300h6M0.900 3.400h6M0.900 5.400h6" stroke="#1c2a4a" stroke-width="0.950"/><path d="M5 7h4.900l-2.450 3z" fill="#1c2a4a"/></svg>
<div style="left:1095px;top:187px;width:23px;height:1px;background:#d4d4d4"></div>
<div style="left:1090px;top:191px;width:32px;height:32px;background:#e9e9e9;border:1px solid #c2c2c2;border-radius:4px;box-sizing:border-box"></div>
<svg width="0" height="0" style="left:0;top:0"><defs><linearGradient id="gSun2" x1="0" y1="0" x2="0" y2="1"><stop offset="0" stop-color="#5c7ca8"/><stop offset="0.45" stop-color="#c89858"/><stop offset="1" stop-color="#f0a428"/></linearGradient><linearGradient id="gFx" x1="0" y1="0" x2="0" y2="1"><stop offset="0" stop-color="#b070b8"/><stop offset="1" stop-color="#6c3480"/></linearGradient></defs></svg>
<svg style="left:1091.5px;top:193.5px" width="28" height="28" viewBox="0 0 28 28"><path d="M4.200 6.500Q3.600 4.500 5.200 3.200L7.300 5.600L9.600 5L10 2.700Q12.500 3 13 5.500Q13.300 7.500 12.400 8.700L19.700 15.900Q22 15.300 23.800 16.900Q25.300 18.700 24.600 20.800L22.300 18.600L20.200 19.200L19.700 21.500L21.800 23.600Q19.500 24.300 17.800 22.700Q16.300 21 17 18.700L9.600 11.400Q7.500 12 5.700 10.500Q4.300 9 4.200 6.500Z" fill="#f2f2f2" stroke="#949494" stroke-width="1" stroke-linejoin="round"/></svg>
<svg style="left:1091.5px;top:229.0px" width="28" height="28" viewBox="0 0 28 28"><text x="14.600" y="21.200" font-size="23.500" font-weight="bold" text-anchor="middle" fill="#585a58" stroke="#2e302e" stroke-width="0.500" font-family="DejaVu Serif, Liberation Serif, serif">T</text><path d="M2.800 24.700V9.500L23.300 24.700Z" fill="#74c860" stroke="#3f9a28" stroke-width="1" stroke-linejoin="round"/><path d="M5.800 21.800V15.800L13.800 21.800Z" fill="#b4e4a4" stroke="#3f9a28" stroke-width="0.800" stroke-linejoin="round"/><path d="M5 23.500h15" stroke="#e8a030" stroke-width="0.800" stroke-dasharray="0.8 1.400"/></svg>
<svg style="left:1091.5px;top:263.0px" width="28" height="28" viewBox="0 0 28 28"><path d="M11.600 6.800L14.100 3.400L16.600 6.800" fill="none" stroke="#777" stroke-width="1"/><rect x="3.900" y="7.400" width="21" height="13.800" rx="1.600" fill="#ec9c24" stroke="#a86400" stroke-width="1.100"/><rect x="6.100" y="9.600" width="16.900" height="9.300" fill="url(#gSun2)" stroke="#7a4a08" stroke-width="0.600"/><path d="M8.200 18.900A2.600 2.600 0 0 1 13.400 18.900Z" fill="#fff2a0"/><path d="M16.600 18.900V14.500M16.600 16L14.300 13.200M16.600 15.500L19 12.800M16.600 14.500L16 11.500M15 14L13.500 13.500M18 13.800L19.800 14" stroke="#1a1408" stroke-width="0.800" fill="none"/></svg>
<svg style="left:1091.9px;top:297.7px" width="28" height="28" viewBox="0 0 28 28"><circle cx="14" cy="14" r="10.300" fill="#f8f8f8" stroke="#8e8e8e" stroke-width="1.500"/><circle cx="14" cy="14" r="8.400" fill="#fff" stroke="#c0c0c0" stroke-width="1"/><path d="M9.300 9.300L15.300 12.700L12.700 15.300Z" fill="#e01828"/><path d="M18.700 18.700L12.700 15.300L15.300 12.700Z" fill="#3a6fc8"/></svg>
<svg style="left:1093.2px;top:333.8px" width="26" height="26" viewBox="0 0 26 26"><ellipse cx="12" cy="22.800" rx="8" ry="0.900" fill="#c8c8c8" opacity="0.700"/><text transform="translate(12.6,20.3) scale(1.32,0.9)" x="0" y="0" font-size="18" font-style="italic" font-weight="bold" text-anchor="middle" fill="#a870b4" stroke="#5c2d6e" stroke-width="0.700" font-family="Liberation Serif, serif">fx</text><path d="M4.27 8.35 L4.45 9.34 L5.40 9.70 L4.51 10.18 L4.45 11.19 L3.72 10.50 L2.75 10.76 L3.18 9.85 L2.63 9.00 L3.63 9.13Z" fill="#f4dc30" stroke="#d0b010" stroke-width="0.500" stroke-linejoin="round"/><path d="M7.19 4.46 L7.44 5.79 L8.70 6.27 L7.51 6.91 L7.44 8.26 L6.46 7.33 L5.16 7.68 L5.74 6.46 L5.01 5.33 L6.35 5.51Z" fill="#f4dc30" stroke="#d0b010" stroke-width="0.500" stroke-linejoin="round"/><path d="M12.89 2.19 L13.23 4.04 L14.99 4.72 L13.34 5.62 L13.23 7.50 L11.87 6.20 L10.04 6.69 L10.86 4.99 L9.83 3.40 L11.70 3.65Z" fill="#f4dc30" stroke="#d0b010" stroke-width="0.500" stroke-linejoin="round"/><path d="M20.92 2.12 L21.37 4.57 L23.69 5.46 L21.50 6.65 L21.37 9.14 L19.56 7.42 L17.15 8.06 L18.23 5.81 L16.87 3.72 L19.34 4.05Z" fill="#f4dc30" stroke="#d0b010" stroke-width="0.500" stroke-linejoin="round"/></svg>
</body></html>
